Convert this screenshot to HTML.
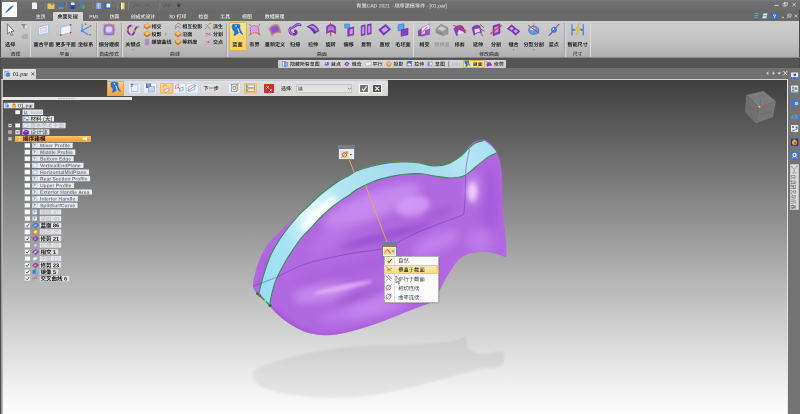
<!DOCTYPE html><html lang="zh-CN"><head><meta charset="utf-8"><title>青翼CAD 2021 - 顺序建模零件 - [01.par]</title><style>
*{margin:0;padding:0;box-sizing:border-box}
html,body{width:800px;height:414px;overflow:hidden;background:#6b6b6b}
body{position:relative;font-family:"Liberation Sans","Noto Sans CJK SC",sans-serif;font-size:4.8px;line-height:1;color:#222}
.a{position:absolute}
.t{position:absolute;white-space:nowrap;line-height:1}
.c{transform:translateX(-50%)}
</style></head><body>
<div class="a" style="left:0;top:0;width:800px;height:21px;background:linear-gradient(#7a7a7a 0,#6e6e6e 2.5px,#6c6c6c 10px,#696969 11.5px,#6a6a6a 21px)"></div>
<div class="a" style="left:0;top:21px;width:800px;height:37px;background:linear-gradient(#cdcdcd,#c3c3c3 55%,#b8b8b8 78%,#adadad)"></div>
<div class="a" style="left:0;top:58px;width:800px;height:10px;background:#555555"></div>
<div class="a" style="left:0;top:68px;width:800px;height:12px;background:#717171"></div>
<div class="a" style="left:0;top:68px;width:2px;height:346px;background:#5a5a5a"></div>
<div class="a" style="left:0;top:0;width:1.1px;height:414px;background:#4c4c4c"></div>
<div class="a" style="left:798.8px;top:10px;width:1.2px;height:404px;background:#4a4a4a"></div>
<div class="a" style="left:788px;top:68px;width:12px;height:346px;background:#737373"></div>
<div class="a" style="left:1.2px;top:79px;width:1.8px;height:335px;background:linear-gradient(to right,#8a8a8a,#c6c6c6)"></div>
<div class="a" style="left:1.2px;top:79px;width:787.2px;height:1.1px;background:#d2d2d2"></div>
<div class="a" style="left:786.8px;top:79px;width:1.6px;height:335px;background:#e6e6e6"></div>
<div class="a" id="vp" style="left:2.8px;top:80px;width:784.2px;height:334px;background:linear-gradient(#3f3f3f 0%,#a3a3a3 51%,#d2d2d2 75%,#eeeeee 90%,#fdfdfd 100%)"></div>
<svg class="a" style="left:0;top:0" width="800" height="414" viewBox="0 0 800 414">
<defs>
<filter id="b1" x="-20%" y="-20%" width="140%" height="140%"><feGaussianBlur stdDeviation="1.2"/></filter>
<filter id="b4" x="-50%" y="-50%" width="200%" height="200%"><feGaussianBlur stdDeviation="5"/></filter>
<filter id="b8" x="-50%" y="-50%" width="200%" height="200%"><feGaussianBlur stdDeviation="9"/></filter>
<filter id="b15" x="-50%" y="-100%" width="200%" height="300%"><feGaussianBlur stdDeviation="1.6"/></filter>
<filter id="b2" x="-50%" y="-50%" width="200%" height="200%"><feGaussianBlur stdDeviation="2.5"/></filter>
<clipPath id="cs"><path d="M257.4,293.5 C256.7,292.3 253.4,289.7 253.0,286.4 C252.6,283.1 253.8,278.3 255.0,273.7 C256.2,269.1 258.1,263.1 260.0,258.5 C261.9,253.8 264.0,249.6 266.6,245.8 C269.2,242.0 271.9,239.2 275.5,235.6 C279.1,232.0 284.0,227.6 288.0,224.0 C292.0,220.4 296.1,217.2 299.6,214.0 C303.1,210.8 305.8,208.1 309.0,205.0 C312.2,201.9 315.7,198.4 319.0,195.5 C322.3,192.6 325.7,190.0 329.0,187.5 C332.3,185.0 335.5,182.7 339.0,180.5 C342.5,178.3 347.1,176.2 350.0,174.5 C352.9,172.8 352.7,172.1 356.6,170.5 C360.5,168.9 367.9,166.6 373.5,165.2 C379.1,163.8 385.1,162.7 390.4,162.1 C395.6,161.5 400.2,161.4 405.0,161.5 C409.8,161.6 414.5,161.8 419.4,162.5 C424.3,163.2 429.6,165.4 434.5,165.5 C439.4,165.6 444.6,164.7 449.0,163.0 C453.4,161.3 457.8,157.9 461.0,155.3 C464.2,152.7 465.6,149.9 468.0,147.6 C470.4,145.3 472.8,142.6 475.5,141.3 C478.2,140.0 482.8,139.9 484.3,139.6 C485.6,140.5 489.7,142.8 491.8,145.0 C493.9,147.2 496.1,151.5 497.0,152.8 C497.4,154.1 499.0,157.6 499.7,160.3 C500.4,163.0 501.0,166.1 501.4,169.0 C501.8,171.9 502.0,174.8 502.2,178.0 C502.4,181.2 502.4,184.7 502.4,188.0 C502.4,191.3 502.3,194.6 502.4,198.0 C502.4,201.4 502.5,204.5 502.7,208.5 C502.9,212.5 503.3,217.5 503.8,222.0 C504.3,226.5 505.1,231.3 505.5,235.5 C505.9,239.7 506.2,243.7 506.3,247.4 C506.4,251.1 506.2,255.9 506.2,257.6 C504.4,256.9 499.1,254.4 495.3,253.4 C491.5,252.4 488.1,251.6 483.5,251.7 C478.9,251.8 472.1,252.6 468.0,254.0 C463.9,255.4 461.4,257.3 458.6,260.0 C455.8,262.7 453.4,266.3 451.0,270.0 C448.6,273.7 445.9,278.6 444.0,282.0 C442.1,285.4 440.8,287.6 439.5,290.5 C438.2,293.4 437.5,297.4 436.0,299.5 C434.5,301.6 433.6,301.4 430.5,302.8 C427.4,304.2 422.4,305.7 417.5,307.6 C412.6,309.5 406.6,311.9 401.2,314.0 C395.8,316.1 390.4,318.5 385.0,320.5 C379.6,322.5 374.1,324.4 368.7,326.2 C363.3,327.9 357.9,329.6 352.5,331.0 C347.1,332.4 341.3,333.8 336.2,334.5 C331.1,335.2 327.2,335.4 322.0,335.0 C316.8,334.6 310.7,334.0 305.0,332.0 C299.3,330.0 292.8,326.0 288.0,322.8 C283.2,319.6 279.0,315.8 276.0,313.0 C273.0,310.2 271.0,307.2 270.0,306.0 L257.4,293.5 Z"/></clipPath>
<clipPath id="cb"><path d="M259.0,292.7 C259.8,289.5 262.1,279.8 264.0,273.7 C265.9,267.6 268.1,261.3 270.4,256.0 C272.7,250.7 275.1,246.7 278.0,242.0 C280.9,237.3 284.5,232.5 288.0,228.0 C291.5,223.5 295.5,218.8 299.0,215.0 C302.5,211.2 305.7,208.7 309.0,205.5 C312.3,202.3 315.7,198.9 319.0,196.0 C322.3,193.1 325.7,190.5 329.0,188.0 C332.3,185.5 335.5,183.2 339.0,181.0 C342.5,178.8 347.1,176.7 350.0,175.0 C352.9,173.3 352.7,172.6 356.6,171.0 C360.5,169.4 367.9,167.1 373.5,165.7 C379.1,164.3 385.1,163.2 390.4,162.6 C395.6,162.0 400.2,161.9 405.0,162.0 C409.8,162.1 414.5,162.3 419.4,163.0 C424.3,163.7 429.6,165.9 434.5,166.0 C439.4,166.1 444.6,165.2 449.0,163.5 C453.4,161.8 457.8,158.4 461.0,156.0 C464.2,153.6 465.6,151.2 468.0,149.0 C470.4,146.8 472.8,144.4 475.5,143.0 C478.2,141.6 482.6,140.9 484.0,140.5 Q491.6,145 497,152.8 C495.4,153.6 491.2,155.0 487.6,157.4 C484.0,159.8 479.3,164.0 475.5,167.0 C471.7,170.0 468.8,173.7 464.7,175.5 C460.6,177.3 456.0,177.9 451.0,178.0 C446.0,178.1 439.4,176.7 434.5,176.0 C429.6,175.3 426.3,174.1 421.8,173.8 C417.3,173.5 412.5,173.5 407.3,174.0 C402.1,174.5 396.0,175.4 390.4,176.6 C384.8,177.8 379.1,179.2 373.5,181.4 C367.9,183.6 360.5,187.3 356.6,189.5 C352.7,191.7 352.6,192.8 350.0,194.6 C347.4,196.4 344.0,198.3 341.0,200.4 C338.0,202.5 335.0,204.6 332.0,207.0 C329.0,209.4 325.9,212.2 323.0,215.0 C320.1,217.8 316.9,221.1 314.6,223.6 C312.3,226.1 311.1,227.8 309.0,230.0 C306.9,232.2 304.8,233.5 302.0,237.0 C299.2,240.5 295.2,246.2 292.0,251.0 C288.8,255.8 285.8,260.9 283.0,266.0 C280.2,271.1 277.6,275.6 275.5,281.3 C273.4,287.0 271.3,296.0 270.4,300.0 C269.5,304.0 270.1,304.6 270.0,305.5 L259,292.7 Z"/></clipPath>
<linearGradient id="gb" x1="260" y1="300" x2="495" y2="150" gradientUnits="userSpaceOnUse">
<stop offset="0" stop-color="#98dcf4"/><stop offset="0.2" stop-color="#a8e3f6"/><stop offset="0.32" stop-color="#e6fbff"/><stop offset="0.45" stop-color="#b2e6f4"/><stop offset="0.7" stop-color="#a3d9ec"/><stop offset="0.9" stop-color="#b4e6f5"/><stop offset="1" stop-color="#a8e0f2"/>
</linearGradient>
</defs>
<path d="M252.2,373.3 C253.7,372.1 254.3,369.1 261.0,366.3 C267.7,363.6 281.4,359.6 292.5,356.8 C303.6,354.1 314.1,351.7 327.5,349.8 C340.9,347.9 358.4,346.2 373.0,345.3 C387.6,344.4 402.2,344.8 415.0,344.2 C427.8,343.6 441.5,343.1 450.0,341.8 C458.5,340.5 463.2,337.4 465.8,336.5 C466.0,337.9 466.1,342.7 467.0,345.0 C467.9,347.3 468.0,349.0 471.0,350.5 C474.0,352.0 480.3,353.9 485.0,354.0 C489.7,354.1 495.8,351.2 499.0,351.2 C502.2,351.2 503.4,353.5 504.3,354.0 C503.7,356.1 505.2,363.7 500.8,366.3 C496.4,368.9 489.4,367.2 478.0,369.8 C466.6,372.4 448.8,377.9 432.5,382.0 C416.2,386.1 397.5,391.7 380.0,394.3 C362.5,396.9 344.4,398.1 327.5,397.8 C310.6,397.5 290.2,394.8 278.5,392.5 C266.8,390.2 261.9,387.0 257.5,383.8 C253.1,380.6 253.1,375.1 252.2,373.3 Z" fill="#000" opacity="0.055" filter="url(#b1)"/>
<path d="M257.4,293.5 C256.7,292.3 253.4,289.7 253.0,286.4 C252.6,283.1 253.8,278.3 255.0,273.7 C256.2,269.1 258.1,263.1 260.0,258.5 C261.9,253.8 264.0,249.6 266.6,245.8 C269.2,242.0 271.9,239.2 275.5,235.6 C279.1,232.0 284.0,227.6 288.0,224.0 C292.0,220.4 296.1,217.2 299.6,214.0 C303.1,210.8 305.8,208.1 309.0,205.0 C312.2,201.9 315.7,198.4 319.0,195.5 C322.3,192.6 325.7,190.0 329.0,187.5 C332.3,185.0 335.5,182.7 339.0,180.5 C342.5,178.3 347.1,176.2 350.0,174.5 C352.9,172.8 352.7,172.1 356.6,170.5 C360.5,168.9 367.9,166.6 373.5,165.2 C379.1,163.8 385.1,162.7 390.4,162.1 C395.6,161.5 400.2,161.4 405.0,161.5 C409.8,161.6 414.5,161.8 419.4,162.5 C424.3,163.2 429.6,165.4 434.5,165.5 C439.4,165.6 444.6,164.7 449.0,163.0 C453.4,161.3 457.8,157.9 461.0,155.3 C464.2,152.7 465.6,149.9 468.0,147.6 C470.4,145.3 472.8,142.6 475.5,141.3 C478.2,140.0 482.8,139.9 484.3,139.6 C485.6,140.5 489.7,142.8 491.8,145.0 C493.9,147.2 496.1,151.5 497.0,152.8 C497.4,154.1 499.0,157.6 499.7,160.3 C500.4,163.0 501.0,166.1 501.4,169.0 C501.8,171.9 502.0,174.8 502.2,178.0 C502.4,181.2 502.4,184.7 502.4,188.0 C502.4,191.3 502.3,194.6 502.4,198.0 C502.4,201.4 502.5,204.5 502.7,208.5 C502.9,212.5 503.3,217.5 503.8,222.0 C504.3,226.5 505.1,231.3 505.5,235.5 C505.9,239.7 506.2,243.7 506.3,247.4 C506.4,251.1 506.2,255.9 506.2,257.6 C504.4,256.9 499.1,254.4 495.3,253.4 C491.5,252.4 488.1,251.6 483.5,251.7 C478.9,251.8 472.1,252.6 468.0,254.0 C463.9,255.4 461.4,257.3 458.6,260.0 C455.8,262.7 453.4,266.3 451.0,270.0 C448.6,273.7 445.9,278.6 444.0,282.0 C442.1,285.4 440.8,287.6 439.5,290.5 C438.2,293.4 437.5,297.4 436.0,299.5 C434.5,301.6 433.6,301.4 430.5,302.8 C427.4,304.2 422.4,305.7 417.5,307.6 C412.6,309.5 406.6,311.9 401.2,314.0 C395.8,316.1 390.4,318.5 385.0,320.5 C379.6,322.5 374.1,324.4 368.7,326.2 C363.3,327.9 357.9,329.6 352.5,331.0 C347.1,332.4 341.3,333.8 336.2,334.5 C331.1,335.2 327.2,335.4 322.0,335.0 C316.8,334.6 310.7,334.0 305.0,332.0 C299.3,330.0 292.8,326.0 288.0,322.8 C283.2,319.6 279.0,315.8 276.0,313.0 C273.0,310.2 271.0,307.2 270.0,306.0 L257.4,293.5 Z" fill="#b168e0"/>
<g clip-path="url(#cs)">
<ellipse cx="372" cy="206" rx="52" ry="13" fill="#cb90f3" opacity="0.85" filter="url(#b4)" transform="rotate(-21 372 206)"/>
<ellipse cx="413" cy="206" rx="17" ry="10" fill="#d6a0f8" opacity="0.8" filter="url(#b2)" transform="rotate(-12 413 206)"/>
<ellipse cx="330" cy="238" rx="26" ry="10" fill="#c080ee" opacity="0.5" filter="url(#b4)" transform="rotate(-40 330 238)"/>
<ellipse cx="386" cy="236" rx="46" ry="5" fill="#8a42c6" opacity="0.5" filter="url(#b2)" transform="rotate(-15 386 236)"/>
<ellipse cx="440" cy="213" rx="16" ry="5" fill="#9a55cf" opacity="0.4" filter="url(#b2)" transform="rotate(-22 440 213)"/>
<ellipse cx="436" cy="243" rx="26" ry="9" fill="#c88cf2" opacity="0.7" filter="url(#b4)" transform="rotate(-25 436 243)"/>
<ellipse cx="350" cy="270" rx="55" ry="6" fill="#9a50d0" opacity="0.3" filter="url(#b4)" transform="rotate(-14 350 270)"/>
<ellipse cx="322" cy="293" rx="30" ry="9" fill="#cf98f4" opacity="0.7" filter="url(#b4)" transform="rotate(-10 322 293)"/>
<ellipse cx="343" cy="287.5" rx="30" ry="2.8" fill="#e8b8fa" opacity="0.75" filter="url(#b15)" transform="rotate(-12 343 287.5)"/>
<ellipse cx="360" cy="296" rx="26" ry="4" fill="#9652c6" opacity="0.45" filter="url(#b2)" transform="rotate(-14 360 296)"/>
<ellipse cx="385" cy="300" rx="40" ry="7" fill="#cf96f5" opacity="0.6" filter="url(#b4)" transform="rotate(-20 385 300)"/>
<ellipse cx="362" cy="312" rx="45" ry="7" fill="#c68cf0" opacity="0.55" filter="url(#b4)" transform="rotate(-9 362 312)"/>
<ellipse cx="474" cy="190" rx="9" ry="16" fill="#cf98f4" opacity="0.7" filter="url(#b4)"/>
<ellipse cx="472.5" cy="192" rx="4.5" ry="10" fill="#f6d6ff" opacity="0.95" filter="url(#b2)"/>
<ellipse cx="490" cy="200" rx="9" ry="34" fill="#9a50d4" opacity="0.45" filter="url(#b4)"/>
<ellipse cx="480" cy="240" rx="14" ry="12" fill="#c488ef" opacity="0.6" filter="url(#b4)"/>
<ellipse cx="268" cy="268" rx="6" ry="22" fill="#9a4fd2" opacity="0.3" filter="url(#b2)" transform="rotate(22 268 268)"/>
<path d="M272,309 C290,327 308,337 326,337.5 C366,335 408,318 436,303" stroke="#8e44c8" stroke-width="5" fill="none" opacity="0.55" filter="url(#b2)"/>
</g>
<path d="M259.0,292.7 C259.8,289.5 262.1,279.8 264.0,273.7 C265.9,267.6 268.1,261.3 270.4,256.0 C272.7,250.7 275.1,246.7 278.0,242.0 C280.9,237.3 284.5,232.5 288.0,228.0 C291.5,223.5 295.5,218.8 299.0,215.0 C302.5,211.2 305.7,208.7 309.0,205.5 C312.3,202.3 315.7,198.9 319.0,196.0 C322.3,193.1 325.7,190.5 329.0,188.0 C332.3,185.5 335.5,183.2 339.0,181.0 C342.5,178.8 347.1,176.7 350.0,175.0 C352.9,173.3 352.7,172.6 356.6,171.0 C360.5,169.4 367.9,167.1 373.5,165.7 C379.1,164.3 385.1,163.2 390.4,162.6 C395.6,162.0 400.2,161.9 405.0,162.0 C409.8,162.1 414.5,162.3 419.4,163.0 C424.3,163.7 429.6,165.9 434.5,166.0 C439.4,166.1 444.6,165.2 449.0,163.5 C453.4,161.8 457.8,158.4 461.0,156.0 C464.2,153.6 465.6,151.2 468.0,149.0 C470.4,146.8 472.8,144.4 475.5,143.0 C478.2,141.6 482.6,140.9 484.0,140.5 Q491.6,145 497,152.8 C495.4,153.6 491.2,155.0 487.6,157.4 C484.0,159.8 479.3,164.0 475.5,167.0 C471.7,170.0 468.8,173.7 464.7,175.5 C460.6,177.3 456.0,177.9 451.0,178.0 C446.0,178.1 439.4,176.7 434.5,176.0 C429.6,175.3 426.3,174.1 421.8,173.8 C417.3,173.5 412.5,173.5 407.3,174.0 C402.1,174.5 396.0,175.4 390.4,176.6 C384.8,177.8 379.1,179.2 373.5,181.4 C367.9,183.6 360.5,187.3 356.6,189.5 C352.7,191.7 352.6,192.8 350.0,194.6 C347.4,196.4 344.0,198.3 341.0,200.4 C338.0,202.5 335.0,204.6 332.0,207.0 C329.0,209.4 325.9,212.2 323.0,215.0 C320.1,217.8 316.9,221.1 314.6,223.6 C312.3,226.1 311.1,227.8 309.0,230.0 C306.9,232.2 304.8,233.5 302.0,237.0 C299.2,240.5 295.2,246.2 292.0,251.0 C288.8,255.8 285.8,260.9 283.0,266.0 C280.2,271.1 277.6,275.6 275.5,281.3 C273.4,287.0 271.3,296.0 270.4,300.0 C269.5,304.0 270.1,304.6 270.0,305.5 L259,292.7 Z" fill="url(#gb)"/>
<g clip-path="url(#cb)">
<ellipse cx="319" cy="213" rx="24" ry="4.5" fill="#ffffff" opacity="0.95" filter="url(#b2)" transform="rotate(-43 319 213)"/>
</g>
<path d="M253.5,286 C257.3,284.6 268.1,280.8 276.3,277.3 C284.5,273.8 293.8,268.2 302.5,265.0 C311.2,261.8 320.1,260.0 328.8,258.0 C337.6,256.0 346.2,254.3 355.0,252.8 C363.8,251.3 374.2,250.6 381.3,248.9 C388.4,247.2 392.5,244.8 397.6,242.5 C402.7,240.2 406.8,237.2 412.0,234.8 C417.2,232.4 423.3,230.2 428.9,228.0 C434.5,225.8 441.0,223.1 445.8,221.3 C450.6,219.5 454.7,218.1 457.7,217.0 C460.7,215.9 462.6,214.9 463.6,214.5 C463.8,213.2 464.2,211.1 464.5,207.0 C464.8,202.9 465.1,196.5 465.3,190.0 C465.6,183.5 465.3,174.8 466.0,168.0 C466.7,161.2 468.9,152.2 469.5,149.0" stroke="#6a3aa8" stroke-width="0.6" fill="none" opacity="0.85"/>
<path d="M259.0,292.7 C259.8,289.5 262.1,279.8 264.0,273.7 C265.9,267.6 268.1,261.3 270.4,256.0 C272.7,250.7 275.1,246.7 278.0,242.0 C280.9,237.3 284.5,232.5 288.0,228.0 C291.5,223.5 295.5,218.8 299.0,215.0 C302.5,211.2 305.7,208.7 309.0,205.5 C312.3,202.3 315.7,198.9 319.0,196.0 C322.3,193.1 325.7,190.5 329.0,188.0 C332.3,185.5 335.5,183.2 339.0,181.0 C342.5,178.8 347.1,176.7 350.0,175.0 C352.9,173.3 352.7,172.6 356.6,171.0 C360.5,169.4 367.9,167.1 373.5,165.7 C379.1,164.3 385.1,163.2 390.4,162.6 C395.6,162.0 400.2,161.9 405.0,162.0 C409.8,162.1 414.5,162.3 419.4,163.0 C424.3,163.7 429.6,165.9 434.5,166.0 C439.4,166.1 444.6,165.2 449.0,163.5 C453.4,161.8 457.8,158.4 461.0,156.0 C464.2,153.6 465.6,151.2 468.0,149.0 C470.4,146.8 472.8,144.4 475.5,143.0 C478.2,141.6 482.6,140.9 484.0,140.5" stroke="#37904f" stroke-width="1.1" fill="none"/>
<path d="M270.0,305.5 C270.1,304.6 269.5,304.0 270.4,300.0 C271.3,296.0 273.4,287.0 275.5,281.3 C277.6,275.6 280.2,271.1 283.0,266.0 C285.8,260.9 288.8,255.8 292.0,251.0 C295.2,246.2 299.2,240.5 302.0,237.0 C304.8,233.5 306.9,232.2 309.0,230.0 C311.1,227.8 312.3,226.1 314.6,223.6 C316.9,221.1 320.1,217.8 323.0,215.0 C325.9,212.2 329.0,209.4 332.0,207.0 C335.0,204.6 338.0,202.5 341.0,200.4 C344.0,198.3 347.4,196.4 350.0,194.6 C352.6,192.8 352.7,191.7 356.6,189.5 C360.5,187.3 367.9,183.6 373.5,181.4 C379.1,179.2 384.8,177.8 390.4,176.6 C396.0,175.4 402.1,174.5 407.3,174.0 C412.5,173.5 417.3,173.5 421.8,173.8 C426.3,174.1 429.6,175.3 434.5,176.0 C439.4,176.7 446.0,178.1 451.0,178.0 C456.0,177.9 460.6,177.3 464.7,175.5 C468.8,173.7 471.7,170.0 475.5,167.0 C479.3,164.0 484.0,159.8 487.6,157.4 C491.2,155.0 495.4,153.6 497.0,152.8" stroke="#37904f" stroke-width="1.1" fill="none"/>
<path d="M257.4,293.5 L270,305.5" stroke="#37904f" stroke-width="1.1" fill="none"/>
<path d="M349.4,160 L354,172 M365.5,185.3 L387,241.9" stroke="#eaa560" stroke-width="1" fill="none"/>
<circle cx="257.6" cy="293.6" r="1.6" fill="#2f6e3a"/><circle cx="270" cy="305.6" r="1.6" fill="#2f6e3a"/><circle cx="259.6" cy="295.6" r="1.3" fill="#d03838"/><circle cx="265" cy="301" r="1.3" fill="#7be07b"/>
</svg>
<div class="a" style="left:2.0px;top:2.0px;width:15.0px;height:15.0px;background:#fdfdfd;border-radius:1px;box-shadow:0 0 0.5px #ccc"></div>
<div class="a" style="left:52.8px;top:12.0px;width:30.2px;height:9.4px;background:linear-gradient(#d9d9d9,#cdcdcd);border-radius:1.2px 1.2px 0 0"></div>
<div class="a" style="left:29.6px;top:22.5px;width:0.6px;height:34.0px;background:#a4a4a4;"></div>
<div class="a" style="left:30.2px;top:22.5px;width:0.5px;height:34.0px;background:#d9d9d9;"></div>
<div class="a" style="left:96.0px;top:22.5px;width:0.6px;height:34.0px;background:#a4a4a4;"></div>
<div class="a" style="left:96.6px;top:22.5px;width:0.5px;height:34.0px;background:#d9d9d9;"></div>
<div class="a" style="left:121.4px;top:22.5px;width:0.6px;height:34.0px;background:#a4a4a4;"></div>
<div class="a" style="left:122.0px;top:22.5px;width:0.5px;height:34.0px;background:#d9d9d9;"></div>
<div class="a" style="left:226.0px;top:22.5px;width:0.6px;height:34.0px;background:#a4a4a4;"></div>
<div class="a" style="left:226.6px;top:22.5px;width:0.5px;height:34.0px;background:#d9d9d9;"></div>
<div class="a" style="left:412.6px;top:22.5px;width:0.6px;height:34.0px;background:#a4a4a4;"></div>
<div class="a" style="left:413.2px;top:22.5px;width:0.5px;height:34.0px;background:#d9d9d9;"></div>
<div class="a" style="left:564.2px;top:22.5px;width:0.6px;height:34.0px;background:#a4a4a4;"></div>
<div class="a" style="left:564.8px;top:22.5px;width:0.5px;height:34.0px;background:#d9d9d9;"></div>
<div class="a" style="left:589.6px;top:22.5px;width:0.6px;height:34.0px;background:#a4a4a4;"></div>
<div class="a" style="left:590.2px;top:22.5px;width:0.5px;height:34.0px;background:#d9d9d9;"></div>
<div class="a" style="left:228.6px;top:22.4px;width:18.4px;height:29.0px;background:linear-gradient(#fde79c,#fbd978 45%,#f8cf5e);border:0.5px solid #e0b548;border-radius:1px"></div>
<div class="a" style="left:0.0px;top:57.2px;width:800.0px;height:0.9px;background:#8a8a8a;"></div>
<div class="a" style="left:277.8px;top:59.8px;width:227.8px;height:7.9px;background:linear-gradient(#d8d8d8,#cecece);border-radius:0.8px"></div>
<div class="a" style="left:463.0px;top:60.0px;width:21.6px;height:7.7px;background:#fbe28a;border:0.4px solid #e3b94d"></div>
<div class="a" style="left:3.0px;top:69.0px;width:33.4px;height:11.0px;background:linear-gradient(#e4e4e4,#d6d6d6);border-radius:1px 1px 0 0"></div>
<div class="a" style="left:2.0px;top:97.3px;width:130.2px;height:2.7px;background:#e6e6e6;"></div>
<div class="a" style="left:14.8px;top:135.8px;width:76.4px;height:6.0px;background:linear-gradient(#f5c766,#eeb040 50%,#e8a52e);border-radius:0.6px"></div>
<div class="a" style="left:106.6px;top:79.6px;width:281.4px;height:16.5px;background:linear-gradient(#e0e0e0,#d6d6d6);border-top:0.6px solid #c6ccd8;border-radius:0.8px"></div>
<div class="a" style="left:106.8px;top:81.0px;width:17.0px;height:14.6px;background:linear-gradient(#f8d08a,#f3b45c 50%,#f0a646);border:0.5px solid #e0a650;border-radius:0.8px"></div>
<div class="a" style="left:128.0px;top:83.0px;width:13.2px;height:11.0px;background:linear-gradient(#f4f7fb,#e4ebf4);border:0.5px solid #d2dae6;border-radius:0.8px"></div>
<div class="a" style="left:143.4px;top:83.0px;width:13.2px;height:11.0px;background:linear-gradient(#f4f7fb,#e4ebf4);border:0.5px solid #d2dae6;border-radius:0.8px"></div>
<div class="a" style="left:159.8px;top:83.0px;width:12.8px;height:11.0px;background:linear-gradient(#f9d894,#f5c46c);border:0.5px solid #ecbe66;border-radius:0.8px"></div>
<div class="a" style="left:173.0px;top:83.0px;width:12.6px;height:11.0px;background:linear-gradient(#f4f7fb,#e4ebf4);border:0.5px solid #d2dae6;border-radius:0.8px"></div>
<div class="a" style="left:186.0px;top:83.0px;width:12.6px;height:11.0px;background:linear-gradient(#f4f7fb,#e4ebf4);border:0.5px solid #d2dae6;border-radius:0.8px"></div>
<div class="a" style="left:200.2px;top:83.0px;width:22.0px;height:10.8px;background:linear-gradient(#e4e4e4,#dadada);border:0.5px solid #d6d6d6;border-radius:0.8px"></div>
<div class="a" style="left:228.4px;top:83.0px;width:12.4px;height:11.0px;background:linear-gradient(#f4f7fb,#e4ebf4);border:0.5px solid #d2dae6;border-radius:0.8px"></div>
<div class="a" style="left:243.8px;top:83.0px;width:13.6px;height:11.0px;background:linear-gradient(#f9d894,#f5c46c);border:0.5px solid #ecbe66;border-radius:0.8px"></div>
<div class="a" style="left:262.8px;top:83.0px;width:12.6px;height:11.0px;background:linear-gradient(#f4f7fb,#e4ebf4);border:0.5px solid #d2dae6;border-radius:0.8px"></div>
<div class="a" style="left:264.4px;top:83.9px;width:9.4px;height:9.4px;background:#d42a2a;border-radius:0.5px"></div>
<div class="a" style="left:296.3px;top:84.4px;width:56.2px;height:8.6px;background:linear-gradient(#dcdcdc,#e6e6e6);border:0.4px solid #c4c4c4;border-radius:0.8px"></div>
<div class="a" style="left:358.3px;top:83.0px;width:11.7px;height:11.0px;background:#f6f6f6;border:0.5px solid #e0e0e0;border-radius:0.8px"></div>
<div class="a" style="left:360.1px;top:85.2px;width:8.0px;height:6.9px;background:#727272;border-radius:0.4px"></div>
<div class="a" style="left:371.7px;top:83.0px;width:11.6px;height:11.0px;background:#f6f6f6;border:0.5px solid #e0e0e0;border-radius:0.8px"></div>
<div class="a" style="left:373.2px;top:85.2px;width:8.0px;height:6.9px;background:#4e4e4e;border-radius:0.4px"></div>
<div class="a" style="left:338.3px;top:144.9px;width:16.7px;height:15.2px;background:#e9edf4;border:0.5px solid #6a82aa;border-radius:0.6px"></div>
<div class="a" style="left:338.7px;top:145.3px;width:15.9px;height:4.2px;background:#7b7d80;border-radius:0.4px 0.4px 0 0"></div>
<div class="a" style="left:381.8px;top:242.3px;width:15.7px;height:14.7px;background:#e9edf4;border:0.5px solid #6a82aa;border-radius:0.6px"></div>
<div class="a" style="left:382.2px;top:242.7px;width:14.9px;height:4.2px;background:#7b7d80;border-radius:0.4px 0.4px 0 0"></div>
<div class="a" style="left:383.6px;top:255.8px;width:55.0px;height:47.0px;background:#fcfcfc;border:0.5px solid #b4b4b4;box-shadow:0.8px 0.8px 1.4px rgba(0,0,0,0.35)"></div>
<div class="a" style="left:394.0px;top:256.6px;width:0.5px;height:45.4px;background:#e2e2e2;"></div>
<div class="a" style="left:384.2px;top:265.1px;width:53.8px;height:9.3px;background:linear-gradient(#fcecb2,#f8da7c);border:0.4px solid #eecf78;border-radius:0.6px"></div>
<div class="a" style="left:789.6px;top:163.9px;width:9.2px;height:46.4px;background:#dcdcdc;border-radius:0.8px;border:0.4px solid #c2c2c2"></div>
<svg class="a" style="left:0;top:0;will-change:transform" width="800" height="414" viewBox="0 0 800 414" font-family="Liberation Sans, Noto Sans CJK SC, sans-serif"><defs><filter id="sb" x="-10%" y="-10%" width="120%" height="120%"><feGaussianBlur stdDeviation="0.35"/></filter></defs><path d="M5.5,13 C7,9.5 10,6.5 13.6,5 C12.6,8 9.5,10.4 5.5,13 Z" fill="#2a6fd0"/><path d="M5.5,13 L8,10.4" stroke="#1d4fa0" stroke-width="0.6"/>
<rect x="32.0" y="2.5" width="5.0" height="6.5" rx="0.6" fill="#f2f5fa" />
<path d="M35.5,2.5 L37,4 L35.5,4 Z" fill="#b7c6dd"/>
<path d="M40.6,5 L42.2,5 L41.4,6 Z" fill="#909090"/>
<path d="M45,2.2 L45,9.6" stroke="#909090" stroke-width="0.5"/>
<rect x="47.5" y="3.6" width="7.0" height="5.4" rx="0.6" fill="#e8c65a" />
<path d="M51,2.4 L53.6,4.4 L51.6,5.4 Z" fill="#3aa04a"/>
<rect x="59.0" y="3.0" width="4.2" height="4.4" rx="0.6" fill="#3d78c8" />
<path d="M58.6,8 L63.6,8" stroke="#9fb4d0" stroke-width="0.8"/>
<path d="M66.6,2.2 L66.6,9.6" stroke="#909090" stroke-width="0.5"/>
<rect x="69.4" y="2.4" width="6.6" height="6.6" rx="0.6" fill="#3563b5" />
<rect x="70.8" y="2.4" width="3.8" height="2.6" rx="0.6" fill="#e9eef8" />
<rect x="71.2" y="6.4" width="3.0" height="2.6" rx="0.6" fill="#203d80" />
<rect x="79.4" y="2.6" width="5.0" height="5.2" rx="0.6" fill="#4b78c4" />
<circle cx="83.4" cy="7" r="1.9" fill="#49a85a"/>
<path d="M88.4,5 L90,5 L89.2,6 Z" fill="#909090"/>
<path d="M93,2.2 L93,9.6" stroke="#909090" stroke-width="0.5"/>
<rect x="95.8" y="2.6" width="5.6" height="6.4" rx="0.6" fill="#6f9ad8" />
<path d="M96.6,4 L100.6,4 M96.6,5.6 L100.6,5.6 M96.6,7.2 L100.6,7.2 M98.6,3 L98.6,8.6" stroke="#e8eef8" stroke-width="0.5"/>
<rect x="104.4" y="2.6" width="5.8" height="6.4" rx="0.6" fill="#3563b5" />
<rect x="106.4" y="3.4" width="3.8" height="4.2" rx="0.6" fill="#f2f5fa" />
<path d="M112.4,5 L114,5 L113.2,6 Z" fill="#909090"/>
<path d="M117.4,2.2 L117.4,9.6" stroke="#909090" stroke-width="0.5"/>
<rect x="121.0" y="2.6" width="3.6" height="6.6" rx="0.6" fill="#f0cf60" />
<path d="M121,2.6 L122.6,3.4 L122.6,9.2 L121,9.2 Z" fill="#fbf3d0"/>
<path d="M128.6,2.2 L128.6,9.6" stroke="#909090" stroke-width="0.5"/>
<path d="M133.4,7.4 C133.6,4.6 137.4,3.6 139.6,6.4" stroke="#5e5e5e" stroke-width="1" fill="none"/><path d="M141.6,5 L143,5 L142.3,5.9 Z" fill="#5e5e5e"/>
<path d="M150.4,7.4 C150.2,4.6 146.4,3.6 144.4,6.4" stroke="#5e5e5e" stroke-width="1" fill="none"/><path d="M153,5 L154.4,5 L153.7,5.9 Z" fill="#5e5e5e"/>
<path d="M160,2.2 L160,9.6" stroke="#909090" stroke-width="0.5"/>
<path d="M163.6,7.6 L166,4 L168.6,6.4 L170,3.4" stroke="#5e5e5e" stroke-width="1.2" fill="none"/>
<path d="M177.2,4 L180.4,4 M177.6,5.4 L180,5.4 L178.8,6.8 Z" stroke="#2a2a2a" stroke-width="0.6" fill="#2a2a2a"/>
<path d="M774.6,5.4 L778.6,5.4" stroke="#e0e0e0" stroke-width="0.9"/>
<rect x="783" y="3.6" width="3" height="2.6" fill="none" stroke="#d8d8d8" stroke-width="0.6"/><rect x="784.4" y="2.6" width="3" height="2.6" fill="none" stroke="#d8d8d8" stroke-width="0.6"/>
<path d="M792.4,3 L795.8,6.2 M795.8,3 L792.4,6.2" stroke="#e6e6e6" stroke-width="0.8"/>
<path d="M754.6,13.6 L758.4,13.6 M754.2,15.6 L758,15.6 M753.8,17.6 L757.6,17.6" stroke="#5aa0ee" stroke-width="0.9"/>
<path d="M763.4,13.4 L767.6,13.4 L767,15.4 L762.8,15.4 Z M762.8,16.2 L766.8,16.2 L766.4,18.2 L762.2,18.2 Z" fill="#dfe8f6"/>
<rect x="771.6" y="12.8" width="5.4" height="6.6" rx="0.8" fill="#2f6fd0"/>
<path d="M781.6,17.4 L784,17.4" stroke="#dcdcdc" stroke-width="0.8"/>
<rect x="787.6" y="15" width="2.6" height="2.2" fill="none" stroke="#d0d0d0" stroke-width="0.5"/><rect x="788.6" y="14" width="2.6" height="2.2" fill="none" stroke="#d0d0d0" stroke-width="0.5"/>
<path d="M794.6,14.4 L797.4,17.4 M797.4,14.4 L794.6,17.4" stroke="#dcdcdc" stroke-width="0.7"/>
<g transform="translate(10.4 29.8) scale(1.00)"><path d="M-3,-6 L-3,4.2 L-0.8,2.2 L0.8,5.8 L2.2,5.2 L0.7,1.7 L3.6,1.5 Z" fill="#f4f4f4" stroke="#555" stroke-width="0.7" stroke-linejoin="round"/></g>
<path d="M9.4,49.4 L11,49.4 L10.2,50.4 Z" fill="#555"/>
<path d="M21,24 L26.6,24 L24.4,26.4 L24.4,29 L23.2,28 L23.2,26.4 Z" fill="#8a8a8a"/><rect x="25" y="24.6" width="2" height="4.4" fill="#e8e8e8" stroke="#9a9a9a" stroke-width="0.3"/>
<path d="M21.4,36.4 L23,34.4 L27.4,34.4 L27.4,38.4 L23,38.4 Z" fill="#b0b0b0" stroke="#9a9a9a" stroke-width="0.4"/>
<g transform="translate(43.6 29.8) scale(1.00)"><path d="M-5,-2.8 L5,-5.2 L5,3 L-5,5.4 Z" fill="#eaf1fb" stroke="#8db5e8" stroke-width="0.7"/><path d="M-3,-1.3 L3,-2.8 L3,1.4 L-3,2.9 Z" fill="#f3d9e6" stroke="#9fc3ef" stroke-width="0.5"/></g>
<g transform="translate(65.7 29.8) scale(1.00)"><path d="M-5,-2.5 L5,-5 L5,2.8 L-5,5.3 Z" fill="#f0f4fa" stroke="#86aee4" stroke-width="0.7"/><circle cx="5" cy="-5" r="0.9" fill="#e03030"/><circle cx="-5" cy="5.3" r="0.9" fill="#e03030"/><circle cx="5" cy="2.8" r="0.9" fill="#e03030"/></g>
<g transform="translate(85.6 29.8) scale(1.00)"><path d="M-3.5,1 L-3.5,-5.5 M-3.5,1 L3.5,-3 M-3.5,1 L2.5,5" stroke="#4a8fdc" stroke-width="1.1" fill="none" stroke-linecap="round"/><circle cx="-3.5" cy="1" r="1.4" fill="#4a90e0"/><circle cx="0" cy="-5.6" r="0.9" fill="#e8502a"/><circle cx="5" cy="-4" r="0.9" fill="#e8502a"/><circle cx="4.6" cy="5" r="0.9" fill="#e8502a"/></g>
<path d="M64.9,49.4 L66.5,49.4 L65.7,50.4 Z" fill="#555"/>
<g transform="translate(109.0 29.8) scale(1.00)"><rect x="-5" y="-5" width="10" height="10" rx="2.5" fill="#a58ad8" stroke="#7b52c0" stroke-width="0.8"/><rect x="-3" y="-3.3" width="6" height="6" rx="2" fill="#d9cdf2"/><circle cx="-5" cy="-5" r="1" fill="#f0a030"/><circle cx="5" cy="-5" r="1" fill="#f0a030"/><circle cx="-5" cy="5" r="1" fill="#f0a030"/><circle cx="5" cy="5" r="1" fill="#f0a030"/><circle cx="0" cy="-6" r="1" fill="#f0a030"/><circle cx="6" cy="0" r="1" fill="#f0a030"/></g>
<g transform="translate(133.0 29.8) scale(1.00)"><path d="M-1,-4 C-6,-5 -7,3 -2,5 C3,6 0,-3 5,-3" stroke="#7a2fb8" stroke-width="1.7" fill="none" stroke-linecap="round"/><circle cx="-1" cy="-4" r="1" fill="#f0a030"/><circle cx="-5.3" cy="0" r="1" fill="#f0a030"/><circle cx="-2" cy="5" r="1" fill="#f0a030"/><circle cx="1.5" cy="1" r="1" fill="#f0a030"/><circle cx="5" cy="-3" r="1" fill="#f0a030"/></g>
<path d="M132.2,49.4 L133.8,49.4 L133,50.4 Z" fill="#555"/>
<g transform="translate(147.0 26.4) scale(1.00)"><path d="M-3.2,-1 L0.4,-3 L3.4,-0.6 L-0.2,1.6 Z" fill="#f4c070" stroke="#c9761c" stroke-width="0.4"/><path d="M-3.2,-1 L-3.2,0.8 L-0.2,3.2 L3.4,1 L3.4,-0.6 L-0.2,1.6 Z" fill="#c9761c"/></g>
<g transform="translate(147.0 34.2) scale(1.00)"><path d="M-3.2,-1 L0.4,-3 L3.4,-0.6 L-0.2,1.6 Z" fill="#f4c070" stroke="#c9761c" stroke-width="0.4"/><path d="M-3.2,-1 L-3.2,0.8 L-0.2,3.2 L3.4,1 L3.4,-0.6 L-0.2,1.6 Z" fill="#c9761c"/></g>
<g transform="translate(147.0 42.0) scale(1.00)"><ellipse cx="0" cy="-2" rx="2.2" ry="0.8" fill="none" stroke="#a24fd8" stroke-width="0.55"/><ellipse cx="0" cy="0" rx="2.2" ry="0.8" fill="none" stroke="#a24fd8" stroke-width="0.55"/><ellipse cx="0" cy="2" rx="2.2" ry="0.8" fill="none" stroke="#a24fd8" stroke-width="0.55"/></g>
<path d="M165,33.8 L166.6,33.8 L165.8,34.8 Z" fill="#555"/>
<g transform="translate(178.0 26.4) scale(1.00)"><path d="M-3,1 C-1,-4 1,-4 3,-1" stroke="#d05aa0" stroke-width="0.9" fill="none"/><path d="M-3,3 C-1,-1 1,0 3,2" stroke="#5a7fd8" stroke-width="0.9" fill="none"/></g>
<g transform="translate(178.0 34.2) scale(1.00)"><path d="M-3.2,-1 L0.4,-3 L3.4,-0.6 L-0.2,1.6 Z" fill="#f4c070" stroke="#c9761c" stroke-width="0.4"/><path d="M-3.2,-1 L-3.2,0.8 L-0.2,3.2 L3.4,1 L3.4,-0.6 L-0.2,1.6 Z" fill="#c9761c"/></g>
<g transform="translate(178.0 42.0) scale(1.00)"><path d="M-3.2,-1 L0.4,-3 L3.4,-0.6 L-0.2,1.6 Z" fill="#f4c070" stroke="#c9761c" stroke-width="0.4"/><path d="M-3.2,-1 L-3.2,0.8 L-0.2,3.2 L3.4,1 L3.4,-0.6 L-0.2,1.6 Z" fill="#c9761c"/></g>
<g transform="translate(208.4 26.4) scale(1.00)"><path d="M-3,3 C-1,-2 1,-3 3,-3" stroke="#6aa84f" stroke-width="0.8" fill="none"/><path d="M-2,-2 L2,3" stroke="#c050a0" stroke-width="0.8"/><circle cx="0" cy="-1" r="0.9" fill="#e8c030"/></g>
<g transform="translate(208.4 34.2) scale(1.00)"><path d="M-3,0 C-1,-3 1,3 3,0" stroke="#e05050" stroke-width="0.9" fill="none"/><path d="M-3,2 L3,-2" stroke="#b070d0" stroke-width="0.7"/></g>
<g transform="translate(208.4 42.0) scale(1.00)"><path d="M-3,3 L3,-3 M-3,-1 L3,1" stroke="#c08ad0" stroke-width="0.8"/><circle cx="0" cy="0" r="0.8" fill="#e04040"/></g>
<g transform="translate(237.4 30.2) scale(1.12)"><path d="M-4.8,-4.2 C-4.8,-5.2 -3.5,-5.4 -1.2,-5.3 C1,-5.4 2.4,-5.2 2.4,-4.4 C2.3,-3 2.1,-2 2.6,-0.6 C3.2,1 4.2,2.4 4.9,3.9 C3.6,3.4 3,2.4 2,2 C1,2 0.6,3 -0.4,3.6 C-1.4,4.2 -2.4,4.8 -3.3,4.6 C-2.6,3.4 -2.4,2.2 -2.8,1.2 C-3.2,0.2 -4.4,-0.4 -4.5,-1.6 C-4.6,-2.6 -4.8,-3.4 -4.8,-4.2 Z" fill="#2672e0" stroke="#1c57b0" stroke-width="0.4"/><circle cx="-1.2" cy="-3.9" r="0.75" fill="#d8e8fc"/><path d="M0.4,-1.5 L1.5,1.6" stroke="#cfe2fb" stroke-width="1.1" stroke-linecap="round"/></g>
<g transform="translate(254.6 29.8) scale(1.00)"><path d="M-5.5,-5.5 L5.5,5.5 M5.5,-5.5 L-5.5,5.5" stroke="#333" stroke-width="0.7" stroke-dasharray="2.2 8.6 20"/><path d="M-4.5,-2 C-2,-5 2,-5 4,-2 L4.5,4 C2,2.5 -2,2.5 -4,4.5 Z" fill="#d9a6e6" stroke="#e05a5a" stroke-width="0.8"/><path d="M-3,-1 C-1,-3 1,-3 3,-1 L3,2 C1,1 -1,1 -3,2.6 Z" fill="#c7a0ee"/></g>
<g transform="translate(275.0 29.8) scale(1.00)"><path d="M-6,-1 C-3,-6 2,-6 4,-4 L6,3 C3,2 -1,3 -3,6 Z" fill="#a672d8" stroke="#e08a3a" stroke-width="0.9"/><path d="M-4,-0.5 C-2,-4 1,-4 3,-2.6 L4,1.8 C2,1.2 -1,2 -2.2,3.8 Z" fill="#8a57c4"/></g>
<g transform="translate(295.2 29.8) scale(1.00)"><path d="M5,-5 C1,-7 -1,-2 -3,-2 C-7,-2 -6,4 -2,4.5 C1,5 2,2 0,1" stroke="#7a2fb8" stroke-width="2.6" fill="none" stroke-linecap="round"/><path d="M5,-5 C1,-7 -1,-2 -3,-2 C-7,-2 -6,4 -2,4.5" stroke="#c79be8" stroke-width="0.9" fill="none"/></g>
<g transform="translate(313.0 29.8) scale(1.00)"><path d="M-6,-3 L-1,-5.5 C2,-5 5,-2 6,1 L1,4 C0,1 -3,-2 -6,-3 Z" fill="#7a2fb8" stroke="#4e1c85" stroke-width="0.5"/><path d="M-4.5,-3 L-1,-4.6 C1.5,-4 4,-1.5 4.8,0.5 L3,1.6 C2,-0.5 -1,-2.6 -4.5,-3 Z" fill="#b98ae0"/></g>
<g transform="translate(330.6 29.8) scale(1.00)"><path d="M-4,-3 C-2,-6 3,-6 5,-3 L5,4 C3,1.5 -2,1.5 -4,4 Z" fill="#8a3fc0" stroke="#5b2a8a" stroke-width="0.5"/><path d="M0,-7 L0,6.5" stroke="#d83030" stroke-width="0.9"/><path d="M-2.6,-2.4 C-1,-4 2,-4 3.6,-2.4 L3.6,1.5 C2,0 -1,0 -2.6,1.6 Z" fill="#b98ae0" opacity="0.8"/></g>
<g transform="translate(348.7 29.8) scale(1.00)"><path d="M-1,-1 L5,-3 L5,5 L-1,6.5 Z" fill="#8a3fc0" stroke="#5b2a8a" stroke-width="0.5"/><path d="M-4,-5.8 L1,-5.8 L1,-1.8 L-4,-1.8 Z" fill="#58a6ee" stroke="#2b6fc2" stroke-width="0.5"/><path d="M1,0 L4,-1 L4,3.6 L1,4.6 Z" fill="#c79be8"/></g>
<g transform="translate(366.2 29.8) scale(1.00)"><path d="M-5,-4 L-1,-5 L-1,5 L-5,6 Z" fill="#8a3fc0" stroke="#5b2a8a" stroke-width="0.5"/><path d="M1,-5 L5,-6 L5,4 L1,5 Z" fill="#8a3fc0" stroke="#5b2a8a" stroke-width="0.5"/><path d="M-4,-2.8 L-2,-3.3 L-2,3.6 L-4,4.2 Z" fill="#c79be8"/><path d="M2,-3.8 L4,-4.3 L4,2.8 L2,3.3 Z" fill="#c79be8"/></g>
<g transform="translate(384.7 29.8) scale(1.00)"><path d="M-6,0 L1,-5.5 L6,-0.5 L-1,5.5 Z" fill="#7a2fb8" stroke="#5b2a8a" stroke-width="0.5"/><path d="M-3.6,0 L0.8,-3.4 L3.8,-0.4 L-0.8,3.2 Z" fill="#c7a2ee"/><path d="M1,-5.5 L6,-0.5" stroke="#4a90e0" stroke-width="1"/></g>
<g transform="translate(403.0 29.8) scale(1.00)"><path d="M-5,-5 L1,-6 L1,0 L-5,1 Z" fill="#58a6ee" stroke="#2b6fc2" stroke-width="0.5"/><path d="M-2,0 L5,-1.5 L5,5 L-2,6.5 Z" fill="#8a3fc0" stroke="#5b2a8a" stroke-width="0.5"/></g>
<g transform="translate(424.4 29.8) scale(1.00)"><path d="M-6,1 L0,-3 L0,6 L-6,6 Z" fill="#8a3fc0" stroke="#5b2a8a" stroke-width="0.5"/><path d="M-3,-2 L5.5,-6 L5.5,2 L-3,5 Z" fill="#e8dff4" stroke="#9a6ad0" stroke-width="0.6"/><path d="M-3,3.5 L3,-3" stroke="#e03a3a" stroke-width="1"/><path d="M0.5,0.5 L5.5,-1.4 L5.5,5 L0.5,6 Z" fill="#9a52cc"/></g>
<g transform="translate(442.0 29.8) scale(1.00)"><path d="M-6,-1 L-1,-5.5 L6,-2 L6,4 L1,6 L-6,3 Z" fill="#9b9b9b" stroke="#777" stroke-width="0.5"/><path d="M-4.4,-0.8 L-1,-3.8 L4.2,-1.4 L0.5,1.4 Z" fill="#c9c9c9"/><path d="M-4,1.4 L0.8,3.4 L0.8,5 L-4,3 Z" fill="#7f7f7f"/></g>
<g transform="translate(459.8 29.8) scale(1.00)"><path d="M-6,-1 C-3,-5 1,-5 3,-3.4 L6,3 C3,2 -1,3 -3,6 Z" fill="#8a3fc0" stroke="#5b2a8a" stroke-width="0.5"/><path d="M-1,0 L4.6,2.4 L1,4.2 L-2.6,4.8 Z" fill="#eadcf6"/><path d="M-6.5,-4.5 L6.5,1" stroke="#e03a3a" stroke-width="1.1"/></g>
<g transform="translate(478.0 29.8) scale(1.00)"><path d="M-6,-2 C-3,-5 0,-5 2,-3.6 L3.4,3 C1,2 -2,3 -4,5.6 Z" fill="#8a3fc0" stroke="#5b2a8a" stroke-width="0.5"/><path d="M-3.6,-0.6 L1.4,-1.6 L2,1.6 L-3,3.4 Z" fill="#e6d6f5"/><path d="M2,-5.5 L6,-2 M3,-0.5 L6.4,1.4 M2.6,3.6 L5.2,6" stroke="#333" stroke-width="0.7"/></g>
<g transform="translate(496.0 29.8) scale(1.00)"><path d="M-3,-4 L4,-6 L4,3.4 L-3,6 Z" fill="#8a3fc0" stroke="#5b2a8a" stroke-width="0.5"/><path d="M-1.4,-2.4 L2.4,-3.6 L2.4,1.8 L-1.4,3.2 Z" fill="#c79be8"/><path d="M-5.6,4 L6,-4.6" stroke="#e03a3a" stroke-width="1.1"/></g>
<g transform="translate(513.6 29.8) scale(1.00)"><path d="M-6.4,-1 L-2,-5 L2.2,-1.6 L6.4,1.6 L2,5.4 L-2,1.8 Z" fill="#7a2fb8" stroke="#5b2a8a" stroke-width="0.5"/><path d="M-4.4,-1 L-2,-3.2 L0.4,-1.2 L-2,0.6 Z" fill="#c79be8"/><path d="M-0.2,1 L2.2,-0.6 L4.4,1.6 L2,3.4 Z" fill="#c79be8"/></g>
<g transform="translate(533.7 29.8) scale(1.00)"><ellipse cx="0" cy="0.5" rx="5.2" ry="4.2" fill="#5a9ee8" stroke="#2b6fc2" stroke-width="0.6"/><ellipse cx="-1" cy="-1" rx="2.6" ry="1.8" fill="#cfe4fb"/><path d="M-5.6,-4.6 L5.6,3.6" stroke="#e03a3a" stroke-width="1"/><path d="M0,-6.4 L0,0.4" stroke="#b060d0" stroke-width="0.7"/></g>
<g transform="translate(553.8 29.8) scale(1.00)"><path d="M-5,5.6 C-2,4 -1,1 0.2,0 C2,-1.4 3,-4.6 5.6,-5.6" stroke="#8a3fc0" stroke-width="1.1" fill="none"/><circle cx="0.2" cy="0" r="2.6" fill="#3f86e0" stroke="#1f5bb4" stroke-width="0.5"/><circle cx="-0.5" cy="-0.8" r="0.9" fill="#cfe4fb"/></g>
<path d="M512.8,49.4 L514.4,49.4 L513.6,50.4 Z" fill="#555"/><path d="M532.9,49.4 L534.5,49.4 L533.7,50.4 Z" fill="#555"/>
<g transform="translate(577.6 29.8) scale(1.00)"><path d="M-5.6,-5.6 L-5.6,5.6 M5.6,-5.6 L5.6,5.6 M-5.6,0 L-2,0 M2,0 L5.6,0" stroke="#2f7fd8" stroke-width="1.1" fill="none"/><path d="M-5.6,0 L-3.4,-1.4 L-3.4,1.4 Z M5.6,0 L3.4,-1.4 L3.4,1.4 Z" fill="#2f7fd8"/><path d="M1.6,-6.4 L-2.2,0.4 L0.2,0.2 L-1.6,5.4 L3,-1.6 L0.4,-1.4 Z" fill="#f6d020" stroke="#c89a10" stroke-width="0.4"/></g>
<path d="M279.6,61 L279.6,66.6" stroke="#8a8a8a" stroke-width="0.6" stroke-dasharray="0.7 0.7"/>
<rect x="282.4" y="61.4" width="3.4" height="4.6" fill="#dfe9f8" stroke="#4a7fd0" stroke-width="0.5"/><rect x="284.4" y="62.6" width="3" height="4" fill="#7fa8e4" stroke="#3a68b8" stroke-width="0.4"/>
<ellipse cx="326.9" cy="63.9" rx="2.6" ry="1.2" fill="none" stroke="#8a4fc0" stroke-width="0.5" transform="rotate(-25 326.9 63.9)"/><circle cx="326.9" cy="63.8" r="1.9" fill="#3f7fe0"/><circle cx="326.3" cy="63.2" r="0.7" fill="#cfe0fa"/>
<path d="M344,64.2 L346.6,61.6 L349.6,63.6 L347,66.4 Z" fill="#8a3fc0"/><path d="M345.6,64 L346.8,62.9 L348,63.9 L346.9,65.1 Z" fill="#d4b6ee"/>
<path d="M365,63 L370.6,61.4 L371.6,64.6 L366,66.2 Z" fill="#eef3fb" stroke="#7fa6e0" stroke-width="0.5"/>
<path d="M386,63.6 L388.8,61.5 L391.6,63.6 L388.8,65.6 Z" fill="#f4c070" stroke="#c9761c" stroke-width="0.5"/><path d="M386.4,65 L388.9,66.7 L391.4,64.8" stroke="#c9761c" stroke-width="0.7" fill="none"/>
<path d="M406.6,62 L411.8,62 L411.8,66.2 L406.6,66.2 Z" fill="#3f78d0"/><path d="M407.4,64 C408.6,62.6 410,63 411.2,64.6 L411.2,65.6 L407.4,65.6 Z" fill="#eef3fb"/><path d="M406.6,62 L408,61 L412.8,61 L411.8,62 Z" fill="#d84040"/>
<path d="M428,61.2 L428,66.8 M428,64 L431.8,61.6 M428,64 L431.8,66" stroke="#3f78d0" stroke-width="0.8" fill="none"/><rect x="429.8" y="62.4" width="2.8" height="3" fill="#e8eef8" stroke="#6a93d6" stroke-width="0.4"/><path d="M431,65.6 l2,-3" stroke="#e8a030" stroke-width="0.6"/>
<path d="M448.7,61 L448.7,66.8" stroke="#6a6a6a" stroke-width="0.7"/>
<path d="M452.4,61.6 L452.4,66.2 M455,62.4 L455,66.2 M457.2,61.6 L457.2,66.2 M459.4,62.8 L459.4,66.2" stroke="#b8b8b8" stroke-width="0.9"/>
<g transform="translate(467.5 63.9) scale(0.58)"><path d="M-4.8,-4.2 C-4.8,-5.2 -3.5,-5.4 -1.2,-5.3 C1,-5.4 2.4,-5.2 2.4,-4.4 C2.3,-3 2.1,-2 2.6,-0.6 C3.2,1 4.2,2.4 4.9,3.9 C3.6,3.4 3,2.4 2,2 C1,2 0.6,3 -0.4,3.6 C-1.4,4.2 -2.4,4.8 -3.3,4.6 C-2.6,3.4 -2.4,2.2 -2.8,1.2 C-3.2,0.2 -4.4,-0.4 -4.5,-1.6 C-4.6,-2.6 -4.8,-3.4 -4.8,-4.2 Z" fill="#2672e0" stroke="#1c57b0" stroke-width="0.4"/><circle cx="-1.2" cy="-3.9" r="0.75" fill="#d8e8fc"/><path d="M0.4,-1.5 L1.5,1.6" stroke="#cfe2fb" stroke-width="1.1" stroke-linecap="round"/></g>
<path d="M486.4,64.4 C487.8,62 489.8,62 491.2,63 L491.8,66 C490.4,65.4 488.4,65.8 487.4,67 Z" fill="#8a3fc0"/><path d="M485.8,61.4 L492.2,65" stroke="#e03a3a" stroke-width="0.7"/>
<rect x="5" y="71.4" width="3" height="4.2" fill="#e8f0fb" stroke="#3a78d0" stroke-width="0.5"/><rect x="6.6" y="73" width="3" height="3.4" fill="#4a8ae0" stroke="#2a5fb0" stroke-width="0.4"/>
<path d="M31.4,72.4 L34.2,75.4 M34.2,72.4 L31.4,75.4" stroke="#333" stroke-width="0.7"/>
<path d="M768.4,71.2 L768.4,75.2 L766.2,73.2 Z" fill="#d0d0d0"/><path d="M772.6,71.2 L772.6,75.2 L774.8,73.2 Z" fill="#d0d0d0"/><path d="M777.4,72.4 L781,72.4 L779.2,74.6 Z" fill="#e4e4e4"/><path d="M783.4,71 L787.2,75.2 M787.2,71 L783.4,75.2" stroke="#f0f0f0" stroke-width="0.9"/>
<path d="M58,98.6 L75,98.6" stroke="#6f8fc8" stroke-width="0.7" stroke-dasharray="0.8 0.8"/>
<rect x="3.8" y="102.75" width="30.4" height="5.5" rx="0.5" fill="#e4e6ea"/>
<rect x="5.2" y="103.4" width="2.6" height="3.6" fill="#e8f0fb" stroke="#3a78d0" stroke-width="0.4"/><rect x="6.4" y="104.7" width="2.4" height="2.8" fill="#4a8ae0"/>
<rect x="12.2" y="104.9" width="3.8" height="3" fill="#e9b44c"/><path d="M12.0,104.9 l2.1,-1.7 l2.1,1.7 Z" fill="#e0703a"/>
<rect x="15.3" y="110.25" width="4.7" height="3.8" fill="#fbfbfb" stroke="#b8c0cc" stroke-width="0.3"/>
<rect x="22.5" y="109.41" width="20.6" height="5.5" rx="0.5" fill="#e4e6ea"/>
<path d="M24.6,114.0 l0,-3.6 M24.6,114.0 l3.4,0 M24.6,114.0 l2.4,-2.2" stroke="#4a7fd0" stroke-width="0.7" fill="none"/><circle cx="26.6" cy="111.6" r="0.7" fill="#d86aa0"/>
<rect x="22.5" y="116.06" width="31.5" height="5.5" rx="0.5" fill="#e4e6ea"/>
<rect x="23.4" y="116.6" width="5" height="4.4" fill="#f4f6fa" stroke="#5a8bd6" stroke-width="0.5"/><circle cx="25" cy="118.4" r="1.1" fill="#e8a030"/><circle cx="27" cy="119.6" r="0.9" fill="#3f86d8"/>
<rect x="8.4" y="123.9" width="3.2" height="3.2" fill="#f2f2f2" stroke="#8a8a8a" stroke-width="0.4"/>
<path d="M9.1,125.5 h1.8" stroke="#333" stroke-width="0.5"/>
<path d="M10.0,124.6 v1.8" stroke="#333" stroke-width="0.5"/>
<rect x="15.3" y="123.56" width="4.7" height="3.8" fill="#fbfbfb" stroke="#b8c0cc" stroke-width="0.3"/>
<rect x="22.5" y="122.72" width="43.1" height="5.5" rx="0.5" fill="#e4e6ea"/>
<path d="M23.6,124.5 l4.4,-1 l0,3.2 l-4.4,1 Z" fill="#eef3fb" stroke="#7fa6e0" stroke-width="0.5"/>
<rect x="8.4" y="130.5" width="3.2" height="3.2" fill="#f2f2f2" stroke="#8a8a8a" stroke-width="0.4"/>
<path d="M9.1,132.1 h1.8" stroke="#333" stroke-width="0.5"/>
<path d="M10.0,131.2 v1.8" stroke="#333" stroke-width="0.5"/>
<rect x="15.3" y="130.0" width="4.6" height="4.2" fill="#e8e8e8" stroke="#9a9a9a" stroke-width="0.4"/><rect x="16.5" y="131.0" width="2.2" height="2.2" fill="#a0a0a0"/>
<rect x="22.5" y="129.37" width="26.9" height="5.5" rx="0.5" fill="#e4e6ea"/>
<path d="M23.2,131.9 l2.4,-2 l3,1 l0.2,2.6 l-2.6,1.6 l-3,-1.2 Z" fill="#7a22c8" stroke="#4e1496" stroke-width="0.4"/><path d="M24.4,131.9 l1.6,-1.2 l1.6,0.6 l-1.4,1.4 Z" fill="#b070e8"/>
<rect x="8.4" y="137.2" width="3.2" height="3.2" fill="#f2f2f2" stroke="#8a8a8a" stroke-width="0.4"/>
<path d="M9.1,138.8 h1.8" stroke="#333" stroke-width="0.5"/>
<rect x="18.8" y="136.8" width="1.8" height="1.6" fill="#fbe6b0"/><rect x="18.8" y="139.2" width="1.8" height="1.6" fill="#fbe6b0"/>
<path d="M81.6,138.8 L87,136.8 L87,140.8 Z" fill="#fdf6e4"/>
<rect x="24.8" y="143.23" width="5.2" height="4.4" fill="#fbfbfb" stroke="#b8c0cc" stroke-width="0.3"/>
<rect x="32" y="142.83" width="40.61" height="5.2" rx="0.4" fill="#e9ebef"/>
<rect x="32.4" y="143.2" width="4.6" height="4.4" fill="#eef3fb" stroke="#9db9e6" stroke-width="0.5"/><path d="M33.4,146.8 l2.6,-2.6" stroke="#e0a02a" stroke-width="0.9"/><path d="M33.0,144.0 l1.6,0 l0,1.6" stroke="#3a68b8" stroke-width="0.5" fill="none"/>
<rect x="24.8" y="149.89" width="5.2" height="4.4" fill="#fbfbfb" stroke="#b8c0cc" stroke-width="0.3"/>
<rect x="32" y="149.49" width="43.38" height="5.2" rx="0.4" fill="#e9ebef"/>
<rect x="32.4" y="149.9" width="4.6" height="4.4" fill="#eef3fb" stroke="#9db9e6" stroke-width="0.5"/><path d="M33.4,153.5 l2.6,-2.6" stroke="#e0a02a" stroke-width="0.9"/><path d="M33.0,150.7 l1.6,0 l0,1.6" stroke="#3a68b8" stroke-width="0.5" fill="none"/>
<rect x="24.8" y="156.54" width="5.2" height="4.4" fill="#fbfbfb" stroke="#b8c0cc" stroke-width="0.3"/>
<rect x="32" y="156.14" width="41.71" height="5.2" rx="0.4" fill="#e9ebef"/>
<rect x="32.4" y="156.5" width="4.6" height="4.4" fill="#eef3fb" stroke="#9db9e6" stroke-width="0.5"/><path d="M33.4,160.1 l2.6,-2.6" stroke="#e0a02a" stroke-width="0.9"/><path d="M33.0,157.3 l1.6,0 l0,1.6" stroke="#3a68b8" stroke-width="0.5" fill="none"/>
<rect x="24.8" y="163.20" width="5.2" height="4.4" fill="#fbfbfb" stroke="#b8c0cc" stroke-width="0.3"/>
<rect x="32" y="162.80" width="51.45" height="5.2" rx="0.4" fill="#e9ebef"/>
<path d="M32.8,164.4 l4.4,-1 l0,3.2 l-4.4,1 Z" fill="#eef3fb" stroke="#7fa6e0" stroke-width="0.5"/>
<rect x="24.8" y="169.85" width="5.2" height="4.4" fill="#fbfbfb" stroke="#b8c0cc" stroke-width="0.3"/>
<rect x="32" y="169.45" width="56.99" height="5.2" rx="0.4" fill="#e9ebef"/>
<path d="M32.8,171.1 l4.4,-1 l0,3.2 l-4.4,1 Z" fill="#eef3fb" stroke="#7fa6e0" stroke-width="0.5"/>
<rect x="24.8" y="176.50" width="5.2" height="4.4" fill="#fbfbfb" stroke="#b8c0cc" stroke-width="0.3"/>
<rect x="32" y="176.10" width="58.11" height="5.2" rx="0.4" fill="#e9ebef"/>
<rect x="32.4" y="176.5" width="4.6" height="4.4" fill="#eef3fb" stroke="#9db9e6" stroke-width="0.5"/><path d="M33.4,180.1 l2.6,-2.6" stroke="#e0a02a" stroke-width="0.9"/><path d="M33.0,177.3 l1.6,0 l0,1.6" stroke="#3a68b8" stroke-width="0.5" fill="none"/>
<rect x="24.8" y="183.16" width="5.2" height="4.4" fill="#fbfbfb" stroke="#b8c0cc" stroke-width="0.3"/>
<rect x="32" y="182.76" width="41.99" height="5.2" rx="0.4" fill="#e9ebef"/>
<rect x="32.4" y="183.2" width="4.6" height="4.4" fill="#eef3fb" stroke="#9db9e6" stroke-width="0.5"/><path d="M33.4,186.8 l2.6,-2.6" stroke="#e0a02a" stroke-width="0.9"/><path d="M33.0,184.0 l1.6,0 l0,1.6" stroke="#3a68b8" stroke-width="0.5" fill="none"/>
<rect x="24.8" y="189.81" width="5.2" height="4.4" fill="#fbfbfb" stroke="#b8c0cc" stroke-width="0.3"/>
<rect x="32" y="189.41" width="60.06" height="5.2" rx="0.4" fill="#e9ebef"/>
<rect x="32.4" y="189.8" width="4.6" height="4.4" fill="#eef3fb" stroke="#9db9e6" stroke-width="0.5"/><path d="M33.4,193.4 l2.6,-2.6" stroke="#e0a02a" stroke-width="0.9"/><path d="M33.0,190.6 l1.6,0 l0,1.6" stroke="#3a68b8" stroke-width="0.5" fill="none"/>
<rect x="24.8" y="196.47" width="5.2" height="4.4" fill="#fbfbfb" stroke="#b8c0cc" stroke-width="0.3"/>
<rect x="32" y="196.07" width="45.88" height="5.2" rx="0.4" fill="#e9ebef"/>
<rect x="32.4" y="196.5" width="4.6" height="4.4" fill="#eef3fb" stroke="#9db9e6" stroke-width="0.5"/><path d="M33.4,200.1 l2.6,-2.6" stroke="#e0a02a" stroke-width="0.9"/><path d="M33.0,197.3 l1.6,0 l0,1.6" stroke="#3a68b8" stroke-width="0.5" fill="none"/>
<rect x="24.8" y="203.12" width="5.2" height="4.4" fill="#fbfbfb" stroke="#b8c0cc" stroke-width="0.3"/>
<rect x="32" y="202.72" width="45.60" height="5.2" rx="0.4" fill="#e9ebef"/>
<rect x="32.4" y="203.1" width="4.6" height="4.4" fill="#eef3fb" stroke="#9db9e6" stroke-width="0.5"/><path d="M33.4,206.7 l2.6,-2.6" stroke="#e0a02a" stroke-width="0.9"/><path d="M33.0,203.9 l1.6,0 l0,1.6" stroke="#3a68b8" stroke-width="0.5" fill="none"/>
<rect x="24.8" y="209.78" width="5.2" height="4.4" fill="#fbfbfb" stroke="#b8c0cc" stroke-width="0.3"/>
<rect x="39.7" y="209.38" width="21.54" height="5.2" rx="0.4" fill="#e6e6e8"/>
<rect x="32.4" y="209.8" width="4.6" height="4.4" fill="#eef3fb" stroke="#9db9e6" stroke-width="0.5"/><path d="M33.4,213.4 l2.6,-2.6" stroke="#e0a02a" stroke-width="0.9"/><path d="M33.0,210.6 l1.6,0 l0,1.6" stroke="#3a68b8" stroke-width="0.5" fill="none"/>
<rect x="24.8" y="216.44" width="5.2" height="4.4" fill="#fbfbfb" stroke="#b8c0cc" stroke-width="0.3"/>
<rect x="39.7" y="216.03" width="21.54" height="5.2" rx="0.4" fill="#e6e6e8"/>
<rect x="32.4" y="216.4" width="4.6" height="4.4" fill="#eef3fb" stroke="#9db9e6" stroke-width="0.5"/><path d="M33.4,220.0 l2.6,-2.6" stroke="#e0a02a" stroke-width="0.9"/><path d="M33.0,217.2 l1.6,0 l0,1.6" stroke="#3a68b8" stroke-width="0.5" fill="none"/>
<rect x="24.8" y="223.09" width="5.2" height="4.4" fill="#fbfbfb" stroke="#b8c0cc" stroke-width="0.3"/>
<path d="M26,225.19 l1.2,1.4 l2,-2.8" stroke="#22356e" stroke-width="0.85" fill="none"/>
<rect x="39.7" y="222.64" width="21.54" height="5.3" rx="0.4" fill="#e2e2e4"/>
<path d="M32.4,225.5 l3.4,-2.6 l3,2.2 l-3.2,3 Z" fill="#2f7fe0" stroke="#1c57b0" stroke-width="0.35"/>
<path d="M33.6,225.5 l2,-1.5 l1.5,1.1 l-1.9,1.7 Z" fill="#8ec0f8"/>
<path d="M32.8,226.3 l2,1.6" stroke="#e8a030" stroke-width="0.6"/>
<rect x="24.8" y="229.75" width="5.2" height="4.4" fill="#fbfbfb" stroke="#b8c0cc" stroke-width="0.3"/>
<rect x="39.7" y="229.34" width="21.54" height="5.2" rx="0.4" fill="#e6e6e8"/>
<path d="M32.4,232.1 l3.4,-2.6 l3,2.2 l-3.2,3 Z" fill="#f0b050" stroke="#c9761c" stroke-width="0.35"/>
<path d="M33.6,232.1 l2,-1.5 l1.5,1.1 l-1.9,1.7 Z" fill="#fbe0a8"/>
<rect x="24.8" y="236.40" width="5.2" height="4.4" fill="#fbfbfb" stroke="#b8c0cc" stroke-width="0.3"/>
<path d="M26,238.50 l1.2,1.4 l2,-2.8" stroke="#22356e" stroke-width="0.85" fill="none"/>
<rect x="39.7" y="235.95" width="21.54" height="5.3" rx="0.4" fill="#e2e2e4"/>
<path d="M32.4,238.8 l3.4,-2.6 l3,2.2 l-3.2,3 Z" fill="#8a3fc0" stroke="#5b2a8a" stroke-width="0.35"/>
<path d="M33.6,238.8 l2,-1.5 l1.5,1.1 l-1.9,1.7 Z" fill="#c9a2ec"/>
<path d="M32.8,237.2 l5.4,2.6" stroke="#e03a3a" stroke-width="0.6"/>
<rect x="24.8" y="243.06" width="5.2" height="4.4" fill="#fbfbfb" stroke="#b8c0cc" stroke-width="0.3"/>
<rect x="39.7" y="242.66" width="21.54" height="5.2" rx="0.4" fill="#e6e6e8"/>
<path d="M32.4,245.5 l3.4,-2.6 l3,2.2 l-3.2,3 Z" fill="#b79ad8" stroke="#9a80c0" stroke-width="0.35"/>
<path d="M33.6,245.5 l2,-1.5 l1.5,1.1 l-1.9,1.7 Z" fill="#ddd0f0"/>
<rect x="24.8" y="249.71" width="5.2" height="4.4" fill="#fbfbfb" stroke="#b8c0cc" stroke-width="0.3"/>
<path d="M26,251.81 l1.2,1.4 l2,-2.8" stroke="#22356e" stroke-width="0.85" fill="none"/>
<rect x="39.7" y="249.26" width="18.49" height="5.3" rx="0.4" fill="#e2e2e4"/>
<path d="M32.4,252.1 l3.4,-2.6 l3,2.2 l-3.2,3 Z" fill="#8a3fc0" stroke="#5b2a8a" stroke-width="0.35"/>
<path d="M33.6,252.1 l2,-1.5 l1.5,1.1 l-1.9,1.7 Z" fill="#c9a2ec"/>
<path d="M33.8,253.7 l3,-3.2" stroke="#f4f4f4" stroke-width="0.6"/>
<rect x="24.8" y="256.37" width="5.2" height="4.4" fill="#fbfbfb" stroke="#b8c0cc" stroke-width="0.3"/>
<rect x="39.7" y="255.97" width="21.54" height="5.2" rx="0.4" fill="#e6e6e8"/>
<path d="M32.8,257.6 l4.4,-1 l0,3.2 l-4.4,1 Z" fill="#eef3fb" stroke="#7fa6e0" stroke-width="0.5"/>
<rect x="24.8" y="263.02" width="5.2" height="4.4" fill="#fbfbfb" stroke="#b8c0cc" stroke-width="0.3"/>
<path d="M26,265.12 l1.2,1.4 l2,-2.8" stroke="#22356e" stroke-width="0.85" fill="none"/>
<rect x="39.7" y="262.57" width="21.54" height="5.3" rx="0.4" fill="#e2e2e4"/>
<path d="M32.4,265.4 l3.4,-2.6 l3,2.2 l-3.2,3 Z" fill="#8a3fc0" stroke="#5b2a8a" stroke-width="0.35"/>
<path d="M33.6,265.4 l2,-1.5 l1.5,1.1 l-1.9,1.7 Z" fill="#c9a2ec"/>
<path d="M32.8,263.8 l5.4,2.6" stroke="#e03a3a" stroke-width="0.6"/>
<rect x="24.8" y="269.68" width="5.2" height="4.4" fill="#fbfbfb" stroke="#b8c0cc" stroke-width="0.3"/>
<path d="M26,271.77 l1.2,1.4 l2,-2.8" stroke="#22356e" stroke-width="0.85" fill="none"/>
<rect x="39.7" y="269.23" width="18.49" height="5.3" rx="0.4" fill="#e2e2e4"/>
<path d="M32.6,270.3 l2.2,-0.8 l0,4 l-2.2,0.8 Z" fill="#3f78d0"/><path d="M36.0,269.5 l2.2,0.8 l0,4 l-2.2,-0.8 Z" fill="#7fb0f0"/><path d="M35.4,269.2 v5.4" stroke="#1c3f80" stroke-width="0.4"/>
<rect x="24.8" y="276.33" width="5.2" height="4.4" fill="#fbfbfb" stroke="#b8c0cc" stroke-width="0.3"/>
<path d="M26,278.43 l1.2,1.4 l2,-2.8" stroke="#22356e" stroke-width="0.85" fill="none"/>
<rect x="39.7" y="275.88" width="29.49" height="5.3" rx="0.4" fill="#e2e2e4"/>
<path d="M32.8,279.5 c1.4,-3 3,-3 5,-0.6" stroke="#d05a5a" stroke-width="0.6" fill="none"/><path d="M32.8,277.9 c1.6,1.6 3.4,0 5,-3.4" stroke="#5a6ad0" stroke-width="0.6" fill="none"/>
<g transform="translate(115.6 87.6) scale(1.0)"><path d="M-4.8,-4.2 C-4.8,-5.2 -3.5,-5.4 -1.2,-5.3 C1,-5.4 2.4,-5.2 2.4,-4.4 C2.3,-3 2.1,-2 2.6,-0.6 C3.2,1 4.2,2.4 4.9,3.9 C3.6,3.4 3,2.4 2,2 C1,2 0.6,3 -0.4,3.6 C-1.4,4.2 -2.4,4.8 -3.3,4.6 C-2.6,3.4 -2.4,2.2 -2.8,1.2 C-3.2,0.2 -4.4,-0.4 -4.5,-1.6 C-4.6,-2.6 -4.8,-3.4 -4.8,-4.2 Z" fill="#2672e0" stroke="#1c57b0" stroke-width="0.4"/><circle cx="-1.2" cy="-3.9" r="0.75" fill="#d8e8fc"/><path d="M0.4,-1.5 L1.5,1.6" stroke="#cfe2fb" stroke-width="1.1" stroke-linecap="round"/></g>
<path d="M126,82 L126,94" stroke="#c8c8c8" stroke-width="0.5"/>
<rect x="131.4" y="84.6" width="6.6" height="7" fill="#eaf0f9" stroke="#7a9fd8" stroke-width="0.5"/><path d="M130.6,84.4 L133.4,84.4 M130.6,86 L133,86" stroke="#2f66c0" stroke-width="0.8"/>
<rect x="146" y="83.6" width="5" height="4.4" fill="#4a6fc0"/><rect x="148.6" y="86.4" width="5.6" height="5.6" fill="#c6d6ee" stroke="#6a8fd0" stroke-width="0.5"/><path d="M147,85 L150,85" stroke="#fff" stroke-width="0.6"/>
<path d="M163,87 c1,-2.6 3,-2.6 4,-1" stroke="#d8902a" stroke-width="0.7" fill="none"/><path d="M165,89.6 l3.6,-1.6 l0,3 l-3.6,1.6 Z" fill="#f4f8fd" stroke="#6a93d6" stroke-width="0.5"/>
<path d="M175.4,85.6 l3.4,-1.2 l0,3 l-3.4,1.2 Z" fill="#f4f8fd" stroke="#d84a4a" stroke-width="0.6"/><path d="M179.6,88.4 l3.6,-1.4 l0,3.2 l-3.6,1.4 Z" fill="#eef3fb" stroke="#5a8bd6" stroke-width="0.6"/><path d="M177,87 l4,2.6" stroke="#d84a4a" stroke-width="0.5"/>
<path d="M188.8,86.6 l6,-2.2 l0,5 l-6,2.2 Z" fill="#f4f8fd" stroke="#5a8bd6" stroke-width="0.6"/><path d="M188.4,90.4 l7.4,-5" stroke="#d84a4a" stroke-width="0.6"/>
<path d="M225.2,82 L225.2,94" stroke="#c8c8c8" stroke-width="0.5"/>
<rect x="231.4" y="84.6" width="5.6" height="7" fill="#eef3fb" stroke="#4a6fb0" stroke-width="0.6"/><rect x="233" y="86.6" width="2.6" height="3" fill="none" stroke="#555" stroke-width="0.5"/><path d="M236.8,84 l1.4,-0.8 l0,7 l-1.4,0.8" fill="#f0b050" stroke="#c9761c" stroke-width="0.3"/>
<rect x="246.4" y="85" width="8.4" height="2.4" fill="#f4f8fd" stroke="#6a6a9a" stroke-width="0.5"/><rect x="246.4" y="89" width="8.4" height="2.4" fill="#f4f8fd" stroke="#6a6a9a" stroke-width="0.5"/><path d="M246,86.2 h2.4 M246,90.2 h2.4" stroke="#3a68b8" stroke-width="0.8"/>
<path d="M259.8,82 L259.8,94" stroke="#c8c8c8" stroke-width="0.5"/>
<path d="M266.4,86 l2.6,2.6 m0,-2.6 l-2.6,2.6 M269.6,89 l2.4,2.4 m0,-2.4 l-2.4,2.4" stroke="#fff" stroke-width="0.7"/>
<path d="M347.6,87.8 l1.7,1.7 l1.7,-1.7" stroke="#555" stroke-width="0.6" fill="none"/>
<path d="M362,88.8 l1.6,1.8 l3,-4.2" stroke="#e8e8e8" stroke-width="1.1" fill="none"/>
<path d="M375.3,86.7 l3.8,3.8 m0,-3.8 l-3.8,3.8" stroke="#f4f4f4" stroke-width="1.2"/>
<rect x="340.5" y="151" width="8.7" height="7.3" fill="#f6dc98"/><circle cx="344.4" cy="154.8" r="2.2" fill="none" stroke="#6a4a9a" stroke-width="0.7"/><path d="M341.4,157.6 l6.4,-6.4" stroke="#d8862a" stroke-width="0.8"/><path d="M346.4,151.6 l1.4,2" stroke="#8a4fc0" stroke-width="0.7"/><path d="M349.8,154 h2.2 l-1.1,1.2 Z" fill="#333"/>
<rect x="383.4" y="248.2" width="11.6" height="6.6" fill="#f6d98e"/><path d="M384.6,253.4 c1.4,-4.6 3.4,-4.6 4.8,-1.8" stroke="#d8602a" stroke-width="0.7" fill="none"/><path d="M387.4,249.8 l3.4,3.8" stroke="#7a3fb0" stroke-width="0.8"/><path d="M392,250.8 h2.2 l-1.1,1.3 Z" fill="#3a3020"/>
<rect x="385.9" y="258.2" width="7" height="5.8" fill="#fbe99a"/><path d="M387.6,261 l1.4,1.7 l2.6,-3.6" stroke="#26305a" stroke-width="0.9" fill="none"/>
<path d="M386,266.4 l4.6,4.6" stroke="#8a4fc0" stroke-width="0.7"/><path d="M388.6,271.4 c0.4,-2.4 1.6,-3.6 3.4,-3.2" stroke="#d86a2a" stroke-width="0.7" fill="none"/><path d="M387,270.6 l1.6,-1.6" stroke="#333" stroke-width="0.5"/>
<path d="M385.6,275.4 l5.4,5.4 M387.8,275 l4,4" stroke="#7a3fb0" stroke-width="0.7"/><path d="M386,281 l5.4,-5" stroke="#d86a6a" stroke-width="0.5"/>
<circle cx="388.4" cy="287.6" r="2.3" fill="none" stroke="#8a4fc0" stroke-width="0.7"/><path d="M385.8,290.8 l5.6,-6.4" stroke="#d86a2a" stroke-width="0.7"/>
<circle cx="388.4" cy="296.8" r="2.3" fill="none" stroke="#8a4fc0" stroke-width="0.7"/><path d="M385.8,300 l5.6,-6.4" stroke="#d86a2a" stroke-width="0.7"/><path d="M389,294 c1.6,0 2.6,1 2.6,2.6" stroke="#3a68b8" stroke-width="0.5" fill="none"/>
<path d="M396,276.2 l0,6.6 l1.5,-1.4 l1,2.4 l0.9,-0.4 l-1,-2.3 l2,-0.1 Z" fill="#fafafa" stroke="#222" stroke-width="0.5" stroke-linejoin="round"/>
<rect x="791" y="72.6" width="7.2" height="6.4" rx="0.5" fill="#dfe8f6"/><rect x="793.6" y="73.8" width="2.4" height="1.9" fill="#3e4658"/><rect x="791" y="77" width="7.2" height="2" fill="#3a6ad0"/><path d="M792,78 h1.2 M795.8,78 h1.6" stroke="#cfe0fa" stroke-width="0.6"/>
<rect x="791" y="85.6" width="7.2" height="6.8" rx="0.5" fill="#dfe7f3"/><rect x="792" y="86.8" width="2" height="1.8" fill="#e0603a"/><rect x="794.6" y="87.4" width="2.6" height="2.4" fill="#4aa860"/><rect x="792" y="89.6" width="2" height="1.6" fill="#4a8ae0"/><path d="M791,92 h7.2" stroke="#5a8ad8" stroke-width="0.8"/>
<path d="M791,98.8 h3 l0.8,1 h3.4 v5.6 h-7.2 Z" fill="#3f78d0"/><rect x="794.4" y="101.6" width="4" height="3.6" fill="#a8c6f2" stroke="#2f5fb0" stroke-width="0.4"/>
<path d="M790.8,119.2 l2,-3 l1.2,1.2 l1.8,-3.4 l1.4,2 l1.2,-1 l0,4.2 Z" fill="#4a8ae0"/><path d="M791.4,117.6 l1.6,-2.2 M795.4,115 l1,1.4" stroke="#9cc4f6" stroke-width="0.5"/>
<rect x="791" y="125" width="7.2" height="7" fill="#e8ecf4"/><circle cx="793" cy="127" r="1.1" fill="#e03a3a"/><circle cx="796.6" cy="127.4" r="1.1" fill="#3aa04a"/><path d="M791.6,131.4 l6.4,-2.8" stroke="#3f78d0" stroke-width="0.8"/><path d="M792,129.6 l2,1.6" stroke="#e03a3a" stroke-width="0.6"/>
<rect x="791" y="138.6" width="7.2" height="7.2" fill="#34348e"/><circle cx="794.6" cy="142.4" r="2.5" fill="#e8c030"/><circle cx="795.2" cy="142.9" r="1.5" fill="#e0503a"/><path d="M792.4,141 a2.6,2.6 0 0 1 3,-1.4" stroke="#4ac8e8" stroke-width="0.7" fill="none"/>
<rect x="791" y="151.6" width="7.2" height="7.2" rx="0.6" fill="#3f78d0"/><circle cx="794.6" cy="155" r="2.2" fill="#dfe8f6"/><circle cx="794.6" cy="155" r="0.9" fill="#3f78d0"/><path d="M792,158.4 l1.4,-1.6 M797.2,158.4 l-1.4,-1.6" stroke="#eef3fb" stroke-width="0.6"/>
<path d="M791.6,166.6 l2.6,3 l3,-3.6 M794.2,169.6 l0,2.4 M792,172.8 l4.6,0" stroke="#6a6a6a" stroke-width="0.55" fill="none"/><circle cx="791.8" cy="166.6" r="0.7" fill="#888"/><circle cx="797" cy="166.2" r="0.7" fill="#888"/>
<g filter="url(#sb)"><path d="M746.1,95.1 L763.3,90.9 L776.1,101.2 L759.4,106.8 Z" fill="#7b7b7b"/><path d="M746.1,95.1 L759.4,106.8 L755.6,123.4 L745,111.8 Z" fill="#6f6f6f"/><path d="M759.4,106.8 L776.1,101.2 L772.8,117.3 L755.6,123.4 Z" fill="#767676"/></g>
<path d="M759.4,106.8 L761,99" stroke="#4a6ae0" stroke-width="0.8"/><path d="M759.4,106.8 L754.6,101.6" stroke="#4ac060" stroke-width="0.8"/><path d="M759.4,106.8 L768,104.4" stroke="#d05a5a" stroke-width="0.8"/><circle cx="759.4" cy="106.8" r="1" fill="#e8d030"/>
<text x="401.60" y="7.49" font-size="5.10" fill="#e8e8e8" text-anchor="middle" transform="rotate(0.03 401.6 7.5)">青翼CAD 2021 - 顺序建模零件 - [01.par]</text>
<text x="774.30" y="18.20" font-size="5.40" fill="#fff" text-anchor="middle" font-weight="bold" transform="rotate(0.03 774.3 18.2)">?</text>
<text x="40.70" y="18.31" font-size="4.90" fill="#ececec" text-anchor="middle" font-weight="500" transform="rotate(0.03 40.7 18.3)">主页</text>
<text x="67.60" y="18.39" font-size="5.10" fill="#111" text-anchor="middle" font-weight="500" transform="rotate(0.03 67.6 18.4)">曲面处理</text>
<text x="93.60" y="18.31" font-size="4.90" fill="#ececec" text-anchor="middle" font-weight="500" transform="rotate(0.03 93.6 18.3)">PMI</text>
<text x="114.60" y="18.31" font-size="4.90" fill="#ececec" text-anchor="middle" font-weight="500" transform="rotate(0.03 114.6 18.3)">仿真</text>
<text x="143.00" y="18.31" font-size="4.90" fill="#ececec" text-anchor="middle" font-weight="500" transform="rotate(0.03 143.0 18.3)">创成式设计</text>
<text x="177.60" y="18.31" font-size="4.90" fill="#ececec" text-anchor="middle" font-weight="500" transform="rotate(0.03 177.6 18.3)">3D 打印</text>
<text x="203.40" y="18.31" font-size="4.90" fill="#ececec" text-anchor="middle" font-weight="500" transform="rotate(0.03 203.4 18.3)">检查</text>
<text x="225.20" y="18.31" font-size="4.90" fill="#ececec" text-anchor="middle" font-weight="500" transform="rotate(0.03 225.2 18.3)">工具</text>
<text x="247.00" y="18.31" font-size="4.90" fill="#ececec" text-anchor="middle" font-weight="500" transform="rotate(0.03 247.0 18.3)">视图</text>
<text x="274.60" y="18.31" font-size="4.90" fill="#ececec" text-anchor="middle" font-weight="500" transform="rotate(0.03 274.6 18.3)">数据管理</text>
<text x="10.20" y="46.19" font-size="5.10" fill="#1a1a1a" text-anchor="middle" font-weight="700" transform="rotate(0.03 10.2 46.2)">选择</text>
<text x="15.40" y="55.71" font-size="4.90" fill="#333" text-anchor="middle" font-weight="500" transform="rotate(0.03 15.4 55.7)">选择</text>
<text x="43.60" y="46.19" font-size="5.10" fill="#1a1a1a" text-anchor="middle" font-weight="700" transform="rotate(0.03 43.6 46.2)">重合平面</text>
<text x="65.70" y="46.19" font-size="5.10" fill="#1a1a1a" text-anchor="middle" font-weight="700" transform="rotate(0.03 65.7 46.2)">更多平面</text>
<text x="85.60" y="46.19" font-size="5.10" fill="#1a1a1a" text-anchor="middle" font-weight="700" transform="rotate(0.03 85.6 46.2)">坐标系</text>
<text x="64.40" y="55.71" font-size="4.90" fill="#333" text-anchor="middle" font-weight="500" transform="rotate(0.03 64.4 55.7)">平面</text>
<text x="109.00" y="46.19" font-size="5.10" fill="#1a1a1a" text-anchor="middle" font-weight="700" transform="rotate(0.03 109.0 46.2)">细分建模</text>
<text x="109.00" y="55.71" font-size="4.90" fill="#333" text-anchor="middle" font-weight="500" transform="rotate(0.03 109.0 55.7)">自由形式</text>
<text x="133.00" y="46.19" font-size="5.10" fill="#1a1a1a" text-anchor="middle" font-weight="700" transform="rotate(0.03 133.0 46.2)">关键点</text>
<text x="151.60" y="28.25" font-size="5.00" fill="#222" font-weight="700" transform="rotate(0.03 151.6 28.2)">相交</text>
<text x="151.60" y="36.05" font-size="5.00" fill="#222" font-weight="700" transform="rotate(0.03 151.6 36.1)">投影</text>
<text x="151.60" y="43.85" font-size="5.00" fill="#222" font-weight="700" transform="rotate(0.03 151.6 43.9)">螺旋曲线</text>
<text x="182.20" y="28.25" font-size="5.00" fill="#222" font-weight="700" transform="rotate(0.03 182.2 28.2)">相互投影</text>
<text x="182.20" y="36.05" font-size="5.00" fill="#222" font-weight="700" transform="rotate(0.03 182.2 36.1)">沿面</text>
<text x="182.20" y="43.85" font-size="5.00" fill="#222" font-weight="700" transform="rotate(0.03 182.2 43.9)">等斜度</text>
<text x="213.00" y="28.25" font-size="5.00" fill="#222" font-weight="700" transform="rotate(0.03 213.0 28.2)">派生</text>
<text x="213.00" y="36.05" font-size="5.00" fill="#222" font-weight="700" transform="rotate(0.03 213.0 36.1)">分割</text>
<text x="213.00" y="43.85" font-size="5.00" fill="#222" font-weight="700" transform="rotate(0.03 213.0 43.9)">交点</text>
<text x="175.00" y="55.71" font-size="4.90" fill="#333" text-anchor="middle" font-weight="500" transform="rotate(0.03 175.0 55.7)">曲线</text>
<text x="237.40" y="46.19" font-size="5.10" fill="#1a1a1a" text-anchor="middle" font-weight="700" transform="rotate(0.03 237.4 46.2)">蓝面</text>
<text x="254.60" y="46.19" font-size="5.10" fill="#1a1a1a" text-anchor="middle" font-weight="700" transform="rotate(0.03 254.6 46.2)">有界</text>
<text x="275.00" y="46.19" font-size="5.10" fill="#1a1a1a" text-anchor="middle" font-weight="700" transform="rotate(0.03 275.0 46.2)">重新定义</text>
<text x="295.20" y="46.19" font-size="5.10" fill="#1a1a1a" text-anchor="middle" font-weight="700" transform="rotate(0.03 295.2 46.2)">扫掠</text>
<text x="313.00" y="46.19" font-size="5.10" fill="#1a1a1a" text-anchor="middle" font-weight="700" transform="rotate(0.03 313.0 46.2)">拉伸</text>
<text x="330.60" y="46.19" font-size="5.10" fill="#1a1a1a" text-anchor="middle" font-weight="700" transform="rotate(0.03 330.6 46.2)">旋转</text>
<text x="348.70" y="46.19" font-size="5.10" fill="#1a1a1a" text-anchor="middle" font-weight="700" transform="rotate(0.03 348.7 46.2)">偏移</text>
<text x="366.20" y="46.19" font-size="5.10" fill="#1a1a1a" text-anchor="middle" font-weight="700" transform="rotate(0.03 366.2 46.2)">复制</text>
<text x="384.70" y="46.19" font-size="5.10" fill="#1a1a1a" text-anchor="middle" font-weight="700" transform="rotate(0.03 384.7 46.2)">直纹</text>
<text x="403.00" y="46.19" font-size="5.10" fill="#1a1a1a" text-anchor="middle" font-weight="700" transform="rotate(0.03 403.0 46.2)">毛坯面</text>
<text x="322.00" y="55.71" font-size="4.90" fill="#333" text-anchor="middle" font-weight="500" transform="rotate(0.03 322.0 55.7)">曲面</text>
<text x="424.40" y="46.19" font-size="5.10" fill="#222" text-anchor="middle" font-weight="700" transform="rotate(0.03 424.4 46.2)">相交</text>
<text x="442.00" y="46.19" font-size="5.10" fill="#9a9a9a" text-anchor="middle" font-weight="700" transform="rotate(0.03 442.0 46.2)">替换面</text>
<text x="459.80" y="46.19" font-size="5.10" fill="#222" text-anchor="middle" font-weight="700" transform="rotate(0.03 459.8 46.2)">修剪</text>
<text x="478.00" y="46.19" font-size="5.10" fill="#222" text-anchor="middle" font-weight="700" transform="rotate(0.03 478.0 46.2)">延伸</text>
<text x="496.00" y="46.19" font-size="5.10" fill="#222" text-anchor="middle" font-weight="700" transform="rotate(0.03 496.0 46.2)">分割</text>
<text x="513.60" y="46.19" font-size="5.10" fill="#222" text-anchor="middle" font-weight="700" transform="rotate(0.03 513.6 46.2)">缝合</text>
<text x="533.70" y="46.19" font-size="5.10" fill="#222" text-anchor="middle" font-weight="700" transform="rotate(0.03 533.7 46.2)">分型分割</text>
<text x="553.80" y="46.19" font-size="5.10" fill="#222" text-anchor="middle" font-weight="700" transform="rotate(0.03 553.8 46.2)">蓝点</text>
<text x="489.00" y="55.71" font-size="4.90" fill="#333" text-anchor="middle" font-weight="500" transform="rotate(0.03 489.0 55.7)">修改曲面</text>
<text x="577.60" y="46.19" font-size="5.10" fill="#1a1a1a" text-anchor="middle" font-weight="700" transform="rotate(0.03 577.6 46.2)">智能尺寸</text>
<text x="577.60" y="55.71" font-size="4.90" fill="#333" text-anchor="middle" font-weight="500" transform="rotate(0.03 577.6 55.7)">尺寸</text>
<text x="290.20" y="65.71" font-size="4.90" fill="#1a1a1a" font-weight="500" transform="rotate(0.03 290.2 65.7)">隐藏所有草图</text>
<text x="331.00" y="65.71" font-size="4.90" fill="#1a1a1a" font-weight="500" transform="rotate(0.03 331.0 65.7)">蓝点</text>
<text x="351.80" y="65.71" font-size="4.90" fill="#1a1a1a" font-weight="500" transform="rotate(0.03 351.8 65.7)">缝合</text>
<text x="372.50" y="65.71" font-size="4.90" fill="#1a1a1a" font-weight="500" transform="rotate(0.03 372.5 65.7)">平行</text>
<text x="393.50" y="65.71" font-size="4.90" fill="#1a1a1a" font-weight="500" transform="rotate(0.03 393.5 65.7)">投影</text>
<text x="414.30" y="65.71" font-size="4.90" fill="#1a1a1a" font-weight="500" transform="rotate(0.03 414.3 65.7)">拉伸</text>
<text x="435.00" y="65.71" font-size="4.90" fill="#1a1a1a" font-weight="500" transform="rotate(0.03 435.0 65.7)">草图</text>
<text x="472.80" y="65.71" font-size="4.90" fill="#1a1a1a" font-weight="500" transform="rotate(0.03 472.8 65.7)">蓝面</text>
<text x="494.00" y="65.71" font-size="4.90" fill="#1a1a1a" font-weight="500" transform="rotate(0.03 494.0 65.7)">修剪</text>
<text x="12.70" y="76.00" font-size="5.40" fill="#111" font-weight="500" transform="rotate(0.03 12.7 76.0)">01.par</text>
<text x="18.10" y="107.46" font-size="5.30" fill="#2a2a2a" transform="rotate(0.03 18.1 107.5)">01.par</text>
<text x="30.60" y="114.08" font-size="5.20" fill="#aab2c2" transform="rotate(0.03 30.6 114.1)">Base</text>
<text x="30.60" y="120.84" font-size="5.50" fill="#2e2e2e" font-weight="500" transform="rotate(0.03 30.6 120.8)">材料 (无)</text>
<text x="30.20" y="127.56" font-size="5.65" fill="#adb4c2" transform="rotate(0.03 30.2 127.6)">基本参考平面</text>
<text x="30.60" y="134.23" font-size="5.70" fill="#6a7286" font-weight="bold" transform="rotate(0.03 30.6 134.2)">设计体</text>
<text x="23.10" y="140.85" font-size="5.60" fill="#111" font-weight="bold" transform="rotate(0.03 23.1 140.8)">顺序建模</text>
<text x="40.00" y="147.28" font-size="5.00" fill="#72778a" font-weight="bold" transform="rotate(0.03 40.0 147.3)">Mixer Profile</text>
<text x="40.00" y="153.94" font-size="5.00" fill="#72778a" font-weight="bold" transform="rotate(0.03 40.0 153.9)">Middle Profile</text>
<text x="40.00" y="160.59" font-size="5.00" fill="#72778a" font-weight="bold" transform="rotate(0.03 40.0 160.6)">Bottom Edge</text>
<text x="40.00" y="167.25" font-size="5.00" fill="#72778a" font-weight="bold" transform="rotate(0.03 40.0 167.2)">VerticalEndPlane</text>
<text x="40.00" y="173.90" font-size="5.00" fill="#72778a" font-weight="bold" transform="rotate(0.03 40.0 173.9)">HorizontalMidPlane</text>
<text x="40.00" y="180.55" font-size="5.00" fill="#72778a" font-weight="bold" transform="rotate(0.03 40.0 180.6)">Rear Section Profile</text>
<text x="40.00" y="187.21" font-size="5.00" fill="#72778a" font-weight="bold" transform="rotate(0.03 40.0 187.2)">Upper Profile</text>
<text x="40.00" y="193.86" font-size="5.00" fill="#72778a" font-weight="bold" transform="rotate(0.03 40.0 193.9)">Exterior Handle Area</text>
<text x="40.00" y="200.52" font-size="5.00" fill="#72778a" font-weight="bold" transform="rotate(0.03 40.0 200.5)">Interior Handle</text>
<text x="40.00" y="207.17" font-size="5.00" fill="#72778a" font-weight="bold" transform="rotate(0.03 40.0 207.2)">SplitSurfCurve</text>
<text x="40.50" y="214.02" font-size="5.50" fill="#b4b9c4" transform="rotate(0.03 40.5 214.0)">草图 47</text>
<text x="40.50" y="220.67" font-size="5.50" fill="#b4b9c4" transform="rotate(0.03 40.5 220.7)">草图 48</text>
<text x="40.50" y="227.33" font-size="5.50" fill="#141414" font-weight="bold" transform="rotate(0.03 40.5 227.3)">蓝面 86</text>
<text x="40.50" y="233.98" font-size="5.50" fill="#b4b9c4" transform="rotate(0.03 40.5 234.0)">投影 25</text>
<text x="40.50" y="240.63" font-size="5.50" fill="#141414" font-weight="bold" transform="rotate(0.03 40.5 240.6)">修剪 21</text>
<text x="40.50" y="247.29" font-size="5.50" fill="#b4b9c4" transform="rotate(0.03 40.5 247.3)">拉伸 25</text>
<text x="40.50" y="253.94" font-size="5.50" fill="#141414" font-weight="bold" transform="rotate(0.03 40.5 253.9)">相交 1</text>
<text x="40.50" y="260.60" font-size="5.50" fill="#b4b9c4" transform="rotate(0.03 40.5 260.6)">平面 12</text>
<text x="40.50" y="267.26" font-size="5.50" fill="#141414" font-weight="bold" transform="rotate(0.03 40.5 267.3)">修剪 23</text>
<text x="40.50" y="273.91" font-size="5.50" fill="#141414" font-weight="bold" transform="rotate(0.03 40.5 273.9)">镜像 5</text>
<text x="40.50" y="280.56" font-size="5.50" fill="#141414" font-weight="bold" transform="rotate(0.03 40.5 280.6)">交叉曲线 6</text>
<text x="211.20" y="90.09" font-size="5.10" fill="#222" text-anchor="middle" font-weight="500" transform="rotate(0.03 211.2 90.1)">下一步</text>
<text x="280.90" y="90.35" font-size="5.00" fill="#2a2a2a" font-weight="500" transform="rotate(0.03 280.9 90.3)">选择:</text>
<text x="298.00" y="90.38" font-size="4.80" fill="#333" transform="rotate(0.03 298.0 90.4)">链</text>
<text x="398.20" y="262.46" font-size="5.30" fill="#444" transform="rotate(0.03 398.2 262.5)">自然</text>
<text x="398.20" y="271.73" font-size="5.30" fill="#1a1a1a" transform="rotate(0.03 398.2 271.7)">垂直于截面</text>
<text x="398.20" y="281.00" font-size="5.30" fill="#444" transform="rotate(0.03 398.2 281.0)">平行于截面</text>
<text x="398.20" y="290.27" font-size="5.30" fill="#444" transform="rotate(0.03 398.2 290.3)">相切连续</text>
<text x="398.20" y="299.54" font-size="5.30" fill="#444" transform="rotate(0.03 398.2 299.5)">曲率连续</text>
<text x="0" y="0" font-size="4.9" fill="#5e5e5e" transform="translate(792.3 174.8) rotate(90)">仿真研究导航器</text>
<text x="0" y="0" font-size="3.4" fill="#666" text-anchor="middle" transform="translate(765.6 114.6) rotate(-19) skewX(-10)">FRONT</text>
<text x="0" y="0" font-size="3.2" fill="#626262" text-anchor="middle" transform="translate(751.2 110.6) rotate(47) skewX(18)">LEFT</text>
<text x="0" y="0" font-size="3" fill="#6c6c6c" text-anchor="middle" transform="translate(761.4 97.6) rotate(14)">TOP</text></svg>
</body></html>
